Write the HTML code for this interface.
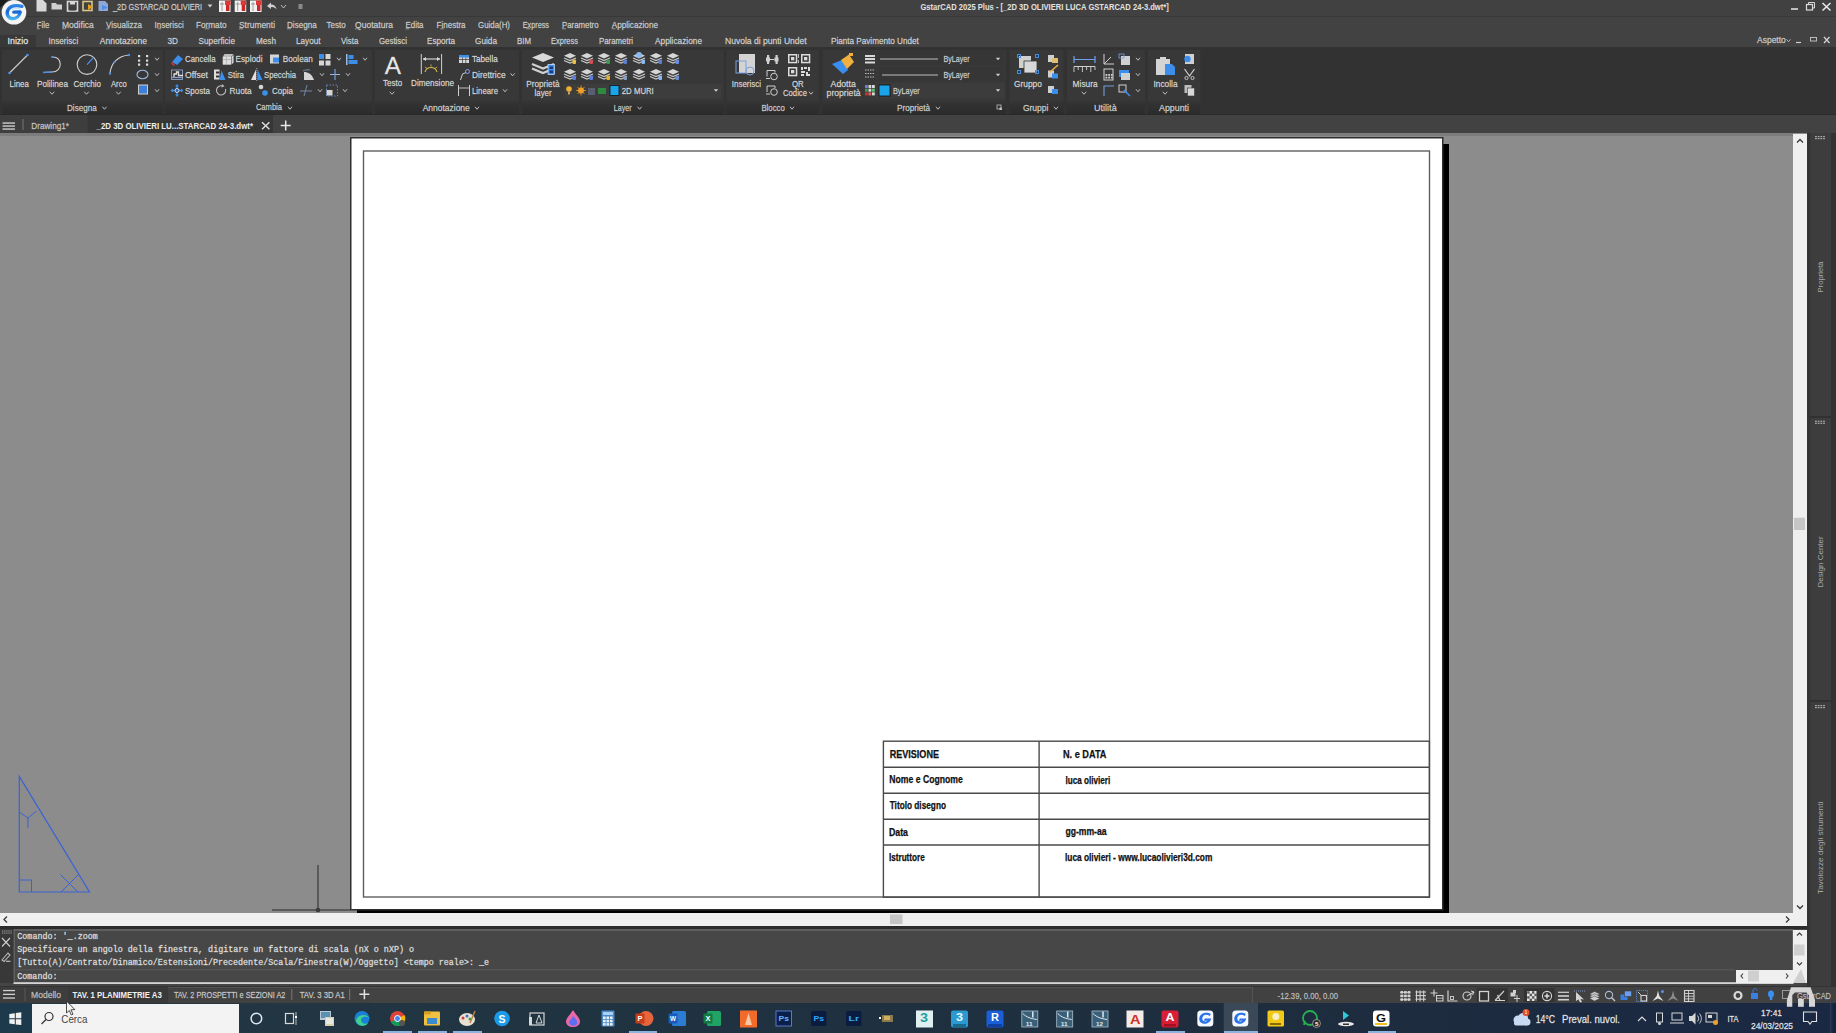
<!DOCTYPE html>
<html><head><meta charset="utf-8"><title>GstarCAD</title>
<style>html,body{margin:0;padding:0;width:1836px;height:1033px;overflow:hidden;background:#8c8c8c;font-family:"Liberation Sans",sans-serif}svg{display:block}</style>
</head><body>
<svg width="1836" height="1033" viewBox="0 0 1836 1033" shape-rendering="geometricPrecision">
<rect x="0" y="0" width="1836" height="16" fill="#414141" />
<rect x="0" y="16" width="1836" height="1" fill="#383838" />
<rect x="0" y="17" width="1836" height="30" fill="#424242" />
<rect x="0" y="35" width="36" height="12" fill="#383838" />
<path d="M0,0 L8,0 L0,8 Z" fill="#1c1c1c" />
<circle cx="14" cy="12.3" r="12.3" fill="#f4f4f4"/>
<defs><linearGradient id="gB" x1="0" y1="0" x2="1" y2="1"><stop offset="0" stop-color="#55b8ff"/><stop offset="1" stop-color="#1747d6"/></linearGradient></defs>
<defs><linearGradient id="gB2" x1="0" y1="0" x2="0" y2="1"><stop offset="0" stop-color="#2f86e8"/><stop offset="0.5" stop-color="#1565d8"/><stop offset="1" stop-color="#46b4f0"/></linearGradient></defs>
<path d="M22,6.3 C16,4.6 10,5.8 7.9,10 C5.9,14.3 8.3,18.6 12.6,18.6 C16.6,18.6 19.6,15.6 20.3,12 L13.8,12.1" fill="none" stroke="url(#gB2)" stroke-width="3.3" stroke-linecap="round" stroke-linejoin="round"/>
<path d="M12,9.5 C15,8.2 18,8.3 21,9" fill="none" stroke="#8fd8ff" stroke-width="0.8" opacity="0.7"/>
<path d="M36.5,0 L43,0 L46.5,3.5 L46.5,11.5 L36.5,11.5 Z" fill="#d8d8d8" />
<path d="M51.5,3 L56,3 L57,4.5 L62,4.5 L62,9.5 L51.5,9.5 Z" fill="#cfcfcf" />
<rect x="67.5" y="1.5" width="10" height="9.5" fill="none" stroke="#d8d8d8" stroke-width="1.6"/>
<rect x="70" y="1.5" width="5" height="3" fill="#d8d8d8" />
<rect x="69.5" y="7" width="6" height="3.5" fill="#3e3e3e" />
<rect x="83" y="1.5" width="9" height="9" fill="none" stroke="#d9c48a" stroke-width="1.6"/>
<path d="M88,4 L93,7 L88,10 Z" fill="#e8a020" />
<path d="M98.5,1 L105,1 L108,4 L108,11 L98.5,11 Z" fill="#8fa6d6" />
<path d="M102,5 L108,7.5 L102,10 Z" fill="#4a8ef0" />
<text x="113.0" y="9.7" font-family="Liberation Sans" font-size="9.2" font-weight="400" fill="#cfcfcf" textLength="89.0" lengthAdjust="spacingAndGlyphs"  stroke="#cfcfcf" stroke-width="0.35" stroke-opacity="0.6">_2D GSTARCAD OLIVIERI</text>
<path d="M207.5,4.5 L212.5,4.5 L210,7.5 Z" fill="#cfcfcf" />
<rect x="219" y="0.5" width="11.5" height="11.5" fill="#f2f2f2" />
<rect x="225" y="0.5" width="5.5" height="4.5" fill="#e03838" />
<rect x="226" y="5" width="3.5" height="6" fill="#c82828" />
<line x1="220" y1="4" x2="224" y2="4" stroke="#888" stroke-width="0.8" />
<line x1="222" y1="2" x2="222" y2="11" stroke="#888" stroke-width="0.8" />
<rect x="234.7" y="0.5" width="11.5" height="11.5" fill="#f2f2f2" />
<rect x="240.7" y="0.5" width="5.5" height="4.5" fill="#e03838" />
<rect x="241.7" y="5" width="3.5" height="6" fill="#c82828" />
<line x1="235.7" y1="4" x2="239.7" y2="4" stroke="#888" stroke-width="0.8" />
<line x1="237.7" y1="2" x2="237.7" y2="11" stroke="#888" stroke-width="0.8" />
<rect x="250" y="0.5" width="11.5" height="11.5" fill="#f2f2f2" />
<rect x="256" y="0.5" width="5.5" height="4.5" fill="#e03838" />
<rect x="257" y="5" width="3.5" height="6" fill="#c82828" />
<line x1="251" y1="4" x2="255" y2="4" stroke="#888" stroke-width="0.8" />
<line x1="253" y1="2" x2="253" y2="11" stroke="#888" stroke-width="0.8" />
<path d="M267,6 L271,2.5 L271,4.5 C274,4.5 276,6 276.5,9.5 C275,7.5 273.5,7 271,7 L271,9 Z" fill="#d0d0d0" />
<path d="M281.0,5.0 L283.5,8.0 L286.0,5.0" fill="none" stroke="#bdbdbd" stroke-width="1" />
<rect x="298.5" y="4" width="4" height="5" fill="#8a8a8a" />
<text x="920.4" y="10.0" font-family="Liberation Sans" font-size="9.2" font-weight="700" fill="#e2e2e2" textLength="248.4" lengthAdjust="spacingAndGlyphs" >GstarCAD 2025 Plus - [_2D 3D OLIVIERI LUCA GSTARCAD 24-3.dwt*]</text>
<line x1="1791" y1="9" x2="1798" y2="9" stroke="#dcdcdc" stroke-width="1.6" />
<rect x="1806.5" y="4.5" width="6" height="5.5" fill="none" stroke="#dcdcdc" stroke-width="1.2"/>
<path d="M1808.5,4.5 L1808.5,2.5 L1814.5,2.5 L1814.5,8 L1812.5,8" fill="none" stroke="#dcdcdc" stroke-width="1" />
<path d="M1822.5,3 L1830.5,10.5 M1830.5,3 L1822.5,10.5" fill="none" stroke="#e6e6e6" stroke-width="1.6" />
<text x="36.8" y="27.7" font-family="Liberation Sans" font-size="9" font-weight="400" fill="#cdcdcd" textLength="12.6" lengthAdjust="spacingAndGlyphs"  stroke="#cdcdcd" stroke-width="0.35" stroke-opacity="0.6">File</text>
<line x1="36.8" y1="28.8" x2="39.949999999999996" y2="28.8" stroke="#a8a8a8" stroke-width="0.8" />
<text x="62.0" y="27.7" font-family="Liberation Sans" font-size="9" font-weight="400" fill="#cdcdcd" textLength="31.8" lengthAdjust="spacingAndGlyphs"  stroke="#cdcdcd" stroke-width="0.35" stroke-opacity="0.6">Modifica</text>
<line x1="62.0" y1="28.8" x2="65.975" y2="28.8" stroke="#a8a8a8" stroke-width="0.8" />
<text x="106.0" y="27.7" font-family="Liberation Sans" font-size="9" font-weight="400" fill="#cdcdcd" textLength="36.0" lengthAdjust="spacingAndGlyphs"  stroke="#cdcdcd" stroke-width="0.35" stroke-opacity="0.6">Visualizza</text>
<line x1="106.0" y1="28.8" x2="109.6" y2="28.8" stroke="#a8a8a8" stroke-width="0.8" />
<text x="154.6" y="27.7" font-family="Liberation Sans" font-size="9" font-weight="400" fill="#cdcdcd" textLength="29.1" lengthAdjust="spacingAndGlyphs"  stroke="#cdcdcd" stroke-width="0.35" stroke-opacity="0.6">Inserisci</text>
<line x1="157.83333333333331" y1="28.8" x2="161.06666666666666" y2="28.8" stroke="#a8a8a8" stroke-width="0.8" />
<text x="196.0" y="27.7" font-family="Liberation Sans" font-size="9" font-weight="400" fill="#cdcdcd" textLength="30.5" lengthAdjust="spacingAndGlyphs"  stroke="#cdcdcd" stroke-width="0.35" stroke-opacity="0.6">Formato</text>
<line x1="204.71428571428572" y1="28.8" x2="209.07142857142856" y2="28.8" stroke="#a8a8a8" stroke-width="0.8" />
<text x="239.0" y="27.7" font-family="Liberation Sans" font-size="9" font-weight="400" fill="#cdcdcd" textLength="36.0" lengthAdjust="spacingAndGlyphs"  stroke="#cdcdcd" stroke-width="0.35" stroke-opacity="0.6">Strumenti</text>
<line x1="239.0" y1="28.8" x2="243.0" y2="28.8" stroke="#a8a8a8" stroke-width="0.8" />
<text x="287.0" y="27.7" font-family="Liberation Sans" font-size="9" font-weight="400" fill="#cdcdcd" textLength="29.7" lengthAdjust="spacingAndGlyphs"  stroke="#cdcdcd" stroke-width="0.35" stroke-opacity="0.6">Disegna</text>
<line x1="287.0" y1="28.8" x2="291.24285714285713" y2="28.8" stroke="#a8a8a8" stroke-width="0.8" />
<text x="326.5" y="27.7" font-family="Liberation Sans" font-size="9" font-weight="400" fill="#cdcdcd" textLength="19.1" lengthAdjust="spacingAndGlyphs"  stroke="#cdcdcd" stroke-width="0.35" stroke-opacity="0.6">Testo</text>
<text x="355.0" y="27.7" font-family="Liberation Sans" font-size="9" font-weight="400" fill="#cdcdcd" textLength="38.0" lengthAdjust="spacingAndGlyphs"  stroke="#cdcdcd" stroke-width="0.35" stroke-opacity="0.6">Quotatura</text>
<line x1="355.0" y1="28.8" x2="359.22222222222223" y2="28.8" stroke="#a8a8a8" stroke-width="0.8" />
<text x="405.5" y="27.7" font-family="Liberation Sans" font-size="9" font-weight="400" fill="#cdcdcd" textLength="18.0" lengthAdjust="spacingAndGlyphs"  stroke="#cdcdcd" stroke-width="0.35" stroke-opacity="0.6">Edita</text>
<line x1="405.5" y1="28.8" x2="409.1" y2="28.8" stroke="#a8a8a8" stroke-width="0.8" />
<text x="436.6" y="27.7" font-family="Liberation Sans" font-size="9" font-weight="400" fill="#cdcdcd" textLength="28.9" lengthAdjust="spacingAndGlyphs"  stroke="#cdcdcd" stroke-width="0.35" stroke-opacity="0.6">Finestra</text>
<line x1="440.21250000000003" y1="28.8" x2="443.82500000000005" y2="28.8" stroke="#a8a8a8" stroke-width="0.8" />
<text x="478.0" y="27.7" font-family="Liberation Sans" font-size="9" font-weight="400" fill="#cdcdcd" textLength="32.0" lengthAdjust="spacingAndGlyphs"  stroke="#cdcdcd" stroke-width="0.35" stroke-opacity="0.6">Guida(H)</text>
<text x="522.7" y="27.7" font-family="Liberation Sans" font-size="9" font-weight="400" fill="#cdcdcd" textLength="26.3" lengthAdjust="spacingAndGlyphs"  stroke="#cdcdcd" stroke-width="0.35" stroke-opacity="0.6">Express</text>
<line x1="526.4571428571429" y1="28.8" x2="530.2142857142858" y2="28.8" stroke="#a8a8a8" stroke-width="0.8" />
<text x="562.0" y="27.7" font-family="Liberation Sans" font-size="9" font-weight="400" fill="#cdcdcd" textLength="36.6" lengthAdjust="spacingAndGlyphs"  stroke="#cdcdcd" stroke-width="0.35" stroke-opacity="0.6">Parametro</text>
<line x1="562.0" y1="28.8" x2="566.0666666666667" y2="28.8" stroke="#a8a8a8" stroke-width="0.8" />
<text x="611.7" y="27.7" font-family="Liberation Sans" font-size="9" font-weight="400" fill="#cdcdcd" textLength="46.3" lengthAdjust="spacingAndGlyphs"  stroke="#cdcdcd" stroke-width="0.35" stroke-opacity="0.6">Applicazione</text>
<line x1="611.7" y1="28.8" x2="615.5583333333334" y2="28.8" stroke="#a8a8a8" stroke-width="0.8" />
<text x="7.5" y="44.1" font-family="Liberation Sans" font-size="9" font-weight="400" fill="#e8e8e8" textLength="20.7" lengthAdjust="spacingAndGlyphs"  stroke="#e8e8e8" stroke-width="0.35" stroke-opacity="0.6">Inizio</text>
<text x="48.5" y="44.1" font-family="Liberation Sans" font-size="9" font-weight="400" fill="#d2d2d2" textLength="29.7" lengthAdjust="spacingAndGlyphs"  stroke="#d2d2d2" stroke-width="0.35" stroke-opacity="0.6">Inserisci</text>
<text x="99.8" y="44.1" font-family="Liberation Sans" font-size="9" font-weight="400" fill="#d2d2d2" textLength="47.2" lengthAdjust="spacingAndGlyphs"  stroke="#d2d2d2" stroke-width="0.35" stroke-opacity="0.6">Annotazione</text>
<text x="167.5" y="44.1" font-family="Liberation Sans" font-size="9" font-weight="400" fill="#d2d2d2" textLength="10.5" lengthAdjust="spacingAndGlyphs"  stroke="#d2d2d2" stroke-width="0.35" stroke-opacity="0.6">3D</text>
<text x="198.6" y="44.1" font-family="Liberation Sans" font-size="9" font-weight="400" fill="#d2d2d2" textLength="36.4" lengthAdjust="spacingAndGlyphs"  stroke="#d2d2d2" stroke-width="0.35" stroke-opacity="0.6">Superficie</text>
<text x="256.0" y="44.1" font-family="Liberation Sans" font-size="9" font-weight="400" fill="#d2d2d2" textLength="20.0" lengthAdjust="spacingAndGlyphs"  stroke="#d2d2d2" stroke-width="0.35" stroke-opacity="0.6">Mesh</text>
<text x="296.0" y="44.1" font-family="Liberation Sans" font-size="9" font-weight="400" fill="#d2d2d2" textLength="24.5" lengthAdjust="spacingAndGlyphs"  stroke="#d2d2d2" stroke-width="0.35" stroke-opacity="0.6">Layout</text>
<text x="341.0" y="44.1" font-family="Liberation Sans" font-size="9" font-weight="400" fill="#d2d2d2" textLength="17.4" lengthAdjust="spacingAndGlyphs"  stroke="#d2d2d2" stroke-width="0.35" stroke-opacity="0.6">Vista</text>
<text x="379.0" y="44.1" font-family="Liberation Sans" font-size="9" font-weight="400" fill="#d2d2d2" textLength="28.0" lengthAdjust="spacingAndGlyphs"  stroke="#d2d2d2" stroke-width="0.35" stroke-opacity="0.6">Gestisci</text>
<text x="427.0" y="44.1" font-family="Liberation Sans" font-size="9" font-weight="400" fill="#d2d2d2" textLength="28.0" lengthAdjust="spacingAndGlyphs"  stroke="#d2d2d2" stroke-width="0.35" stroke-opacity="0.6">Esporta</text>
<text x="475.0" y="44.1" font-family="Liberation Sans" font-size="9" font-weight="400" fill="#d2d2d2" textLength="22.0" lengthAdjust="spacingAndGlyphs"  stroke="#d2d2d2" stroke-width="0.35" stroke-opacity="0.6">Guida</text>
<text x="517.0" y="44.1" font-family="Liberation Sans" font-size="9" font-weight="400" fill="#d2d2d2" textLength="14.0" lengthAdjust="spacingAndGlyphs"  stroke="#d2d2d2" stroke-width="0.35" stroke-opacity="0.6">BIM</text>
<text x="551.0" y="44.1" font-family="Liberation Sans" font-size="9" font-weight="400" fill="#d2d2d2" textLength="27.0" lengthAdjust="spacingAndGlyphs"  stroke="#d2d2d2" stroke-width="0.35" stroke-opacity="0.6">Express</text>
<text x="599.0" y="44.1" font-family="Liberation Sans" font-size="9" font-weight="400" fill="#d2d2d2" textLength="34.0" lengthAdjust="spacingAndGlyphs"  stroke="#d2d2d2" stroke-width="0.35" stroke-opacity="0.6">Parametri</text>
<text x="655.0" y="44.1" font-family="Liberation Sans" font-size="9" font-weight="400" fill="#d2d2d2" textLength="47.0" lengthAdjust="spacingAndGlyphs"  stroke="#d2d2d2" stroke-width="0.35" stroke-opacity="0.6">Applicazione</text>
<text x="725.0" y="44.1" font-family="Liberation Sans" font-size="9" font-weight="400" fill="#d2d2d2" textLength="81.7" lengthAdjust="spacingAndGlyphs"  stroke="#d2d2d2" stroke-width="0.35" stroke-opacity="0.6">Nuvola di punti Undet</text>
<text x="831.0" y="44.1" font-family="Liberation Sans" font-size="9" font-weight="400" fill="#d2d2d2" textLength="87.8" lengthAdjust="spacingAndGlyphs"  stroke="#d2d2d2" stroke-width="0.35" stroke-opacity="0.6">Pianta Pavimento Undet</text>
<text x="1757.0" y="43.4" font-family="Liberation Sans" font-size="9" font-weight="400" fill="#cfcfcf" textLength="28.8" lengthAdjust="spacingAndGlyphs"  stroke="#cfcfcf" stroke-width="0.35" stroke-opacity="0.6">Aspetto</text>
<path d="M1786.5,39.25 L1788.5,41.75 L1790.5,39.25" fill="none" stroke="#bbb" stroke-width="0.9" />
<line x1="1796" y1="42.5" x2="1801" y2="42.5" stroke="#cfcfcf" stroke-width="1.2" />
<rect x="1810.5" y="37.5" width="6" height="3.5" fill="none" stroke="#bdbdbd" stroke-width="1"/>
<path d="M1824,37 L1829.5,43 M1829.5,37 L1824,43" fill="none" stroke="#d0d0d0" stroke-width="1.3" />
<rect x="0" y="47" width="1836" height="67" fill="#323232" />
<rect x="0" y="114" width="1836" height="1" fill="#2a2a2a" />
<defs><linearGradient id="ptg" x1="0" y1="0" x2="0" y2="1"><stop offset="0" stop-color="#373737"/><stop offset="0.35" stop-color="#313131"/><stop offset="1" stop-color="#2c2c2c"/></linearGradient></defs>
<rect x="2" y="50" width="161" height="51" fill="#383838" />
<rect x="2" y="100" width="161" height="14" fill="url(#ptg)" />
<rect x="164.8" y="50" width="207.2" height="51" fill="#383838" />
<rect x="164.8" y="100" width="207.2" height="14" fill="url(#ptg)" />
<rect x="374.8" y="50" width="144.2" height="51" fill="#383838" />
<rect x="374.8" y="100" width="144.2" height="14" fill="url(#ptg)" />
<rect x="521.7" y="50" width="202.29999999999995" height="51" fill="#383838" />
<rect x="521.7" y="100" width="202.29999999999995" height="14" fill="url(#ptg)" />
<rect x="726.3" y="50" width="92.40000000000009" height="51" fill="#383838" />
<rect x="726.3" y="100" width="92.40000000000009" height="14" fill="url(#ptg)" />
<rect x="822.7" y="50" width="183.29999999999995" height="51" fill="#383838" />
<rect x="822.7" y="100" width="183.29999999999995" height="14" fill="url(#ptg)" />
<rect x="1009.5" y="50" width="54.09999999999991" height="51" fill="#383838" />
<rect x="1009.5" y="100" width="54.09999999999991" height="14" fill="url(#ptg)" />
<rect x="1067" y="50" width="78" height="51" fill="#383838" />
<rect x="1067" y="100" width="78" height="14" fill="url(#ptg)" />
<rect x="1148" y="50" width="52.40000000000009" height="51" fill="#383838" />
<rect x="1148" y="100" width="52.40000000000009" height="14" fill="url(#ptg)" />
<line x1="9.5" y1="73" x2="27.5" y2="55" stroke="#cfcfcf" stroke-width="1.1" />
<circle cx="9.5" cy="73" r="1.3" fill="#4d8fe8"/><circle cx="27.5" cy="55" r="1.3" fill="#4d8fe8"/>
<path d="M52,57 C63,56 63,72 52,72 L43,72.5" fill="none" stroke="#cfcfcf" stroke-width="1.1" />
<line x1="43" y1="72.5" x2="52" y2="72" stroke="#4d8fe8" stroke-width="1.3" />
<circle cx="52" cy="57" r="1" fill="#4d8fe8"/>
<circle cx="87" cy="64.6" r="9.8" fill="none" stroke="#cfcfcf" stroke-width="1.1"/>
<line x1="87" y1="64.6" x2="93.5" y2="57.5" stroke="#4d8fe8" stroke-width="1.2" />
<path d="M110,73.5 C111,63 118,56 129,55" fill="none" stroke="#cfcfcf" stroke-width="1.1" />
<circle cx="110" cy="73.5" r="1.2" fill="#4d8fe8"/><circle cx="129" cy="55" r="1.2" fill="#4d8fe8"/><circle cx="114.5" cy="62" r="1.1" fill="#4d8fe8"/>
<text x="9.5" y="86.7" font-family="Liberation Sans" font-size="9" font-weight="400" fill="#d6d6d6" textLength="19.3" lengthAdjust="spacingAndGlyphs"  stroke="#d6d6d6" stroke-width="0.35" stroke-opacity="0.6">Linea</text>
<text x="36.9" y="86.7" font-family="Liberation Sans" font-size="9" font-weight="400" fill="#d6d6d6" textLength="31.1" lengthAdjust="spacingAndGlyphs"  stroke="#d6d6d6" stroke-width="0.35" stroke-opacity="0.6">Polilinea</text>
<text x="73.5" y="86.7" font-family="Liberation Sans" font-size="9" font-weight="400" fill="#d6d6d6" textLength="27.5" lengthAdjust="spacingAndGlyphs"  stroke="#d6d6d6" stroke-width="0.35" stroke-opacity="0.6">Cerchio</text>
<text x="111.0" y="86.7" font-family="Liberation Sans" font-size="9" font-weight="400" fill="#d6d6d6" textLength="15.8" lengthAdjust="spacingAndGlyphs"  stroke="#d6d6d6" stroke-width="0.35" stroke-opacity="0.6">Arco</text>
<path d="M49.75,91.75 L52,94.25 L54.25,91.75" fill="none" stroke="#bdbdbd" stroke-width="1" />
<path d="M84.25,91.75 L86.5,94.25 L88.75,91.75" fill="none" stroke="#bdbdbd" stroke-width="1" />
<path d="M116.25,91.75 L118.5,94.25 L120.75,91.75" fill="none" stroke="#bdbdbd" stroke-width="1" />
<rect x="138" y="55" width="2.2" height="2.2" fill="#dcdcdc" />
<rect x="146" y="55" width="2.2" height="2.2" fill="#dcdcdc" />
<rect x="138" y="59.5" width="2.2" height="2.2" fill="#dcdcdc" />
<rect x="146" y="59.5" width="2.2" height="2.2" fill="#dcdcdc" />
<rect x="138" y="63.5" width="2.2" height="2.2" fill="#dcdcdc" />
<rect x="146" y="63.5" width="2.2" height="2.2" fill="#dcdcdc" />
<ellipse cx="142.5" cy="74.5" rx="5.5" ry="4.3" fill="none" stroke="#9fb8e0" stroke-width="1.1"/>
<rect x="138.5" y="85" width="9" height="9" fill="#3f7fd8" stroke="#cfcfcf" stroke-width="1"/>
<path d="M155.0,57.75 L157,60.25 L159.0,57.75" fill="none" stroke="#bdbdbd" stroke-width="1" />
<path d="M155.0,73.25 L157,75.75 L159.0,73.25" fill="none" stroke="#bdbdbd" stroke-width="1" />
<path d="M155.0,89.25 L157,91.75 L159.0,89.25" fill="none" stroke="#bdbdbd" stroke-width="1" />
<text x="67.0" y="110.8" font-family="Liberation Sans" font-size="9" font-weight="400" fill="#cfcfcf" textLength="29.7" lengthAdjust="spacingAndGlyphs"  stroke="#cfcfcf" stroke-width="0.35" stroke-opacity="0.6">Disegna</text>
<path d="M102.5,106.75 L104.5,109.25 L106.5,106.75" fill="none" stroke="#bdbdbd" stroke-width="1" />
<path d="M172,62 L178,55 L183,59 L177,65 Z" fill="#3b8eea" />
<path d="M172,62 L175,65 L173.5,66 L171,63.5 Z" fill="#d23030" />
<path d="M222.7,57 L224.5,54 L233.5,54 L231,57 Z" fill="#bdbdbd" />
<rect x="222.7" y="57" width="8.3" height="7.7" fill="#dedede" />
<path d="M231.5,57 L233.6,54.5 L233.6,62.5 L231.5,64.7 Z" fill="#d0d0d0" />
<line x1="223" y1="59.5" x2="231" y2="59.5" stroke="#9a9a9a" stroke-width="0.6" />
<line x1="226.5" y1="57" x2="226.5" y2="64.7" stroke="#9a9a9a" stroke-width="0.5" />
<rect x="270" y="54.5" width="9" height="9" fill="#d6d6d6" />
<rect x="273" y="57.5" width="6" height="5" fill="#3b8eea" />
<rect x="319" y="54" width="5" height="5" fill="#3b8eea" />
<rect x="325.5" y="54" width="5" height="5" fill="#d6d6d6" />
<rect x="319" y="60.5" width="5" height="5" fill="#d6d6d6" />
<rect x="325.5" y="60.5" width="5" height="5" fill="#d6d6d6" />
<path d="M337.0,57.75 L339,60.25 L341.0,57.75" fill="none" stroke="#bdbdbd" stroke-width="1" />
<rect x="346" y="54" width="1.5" height="11" fill="#9fb8e0" />
<rect x="348.5" y="55" width="5" height="4" fill="#3b8eea" />
<rect x="348.5" y="60" width="9" height="4" fill="#3b8eea" />
<path d="M363.0,57.75 L365,60.25 L367.0,57.75" fill="none" stroke="#bdbdbd" stroke-width="1" />
<text x="185.0" y="62.1" font-family="Liberation Sans" font-size="9" font-weight="400" fill="#d6d6d6" textLength="30.7" lengthAdjust="spacingAndGlyphs"  stroke="#d6d6d6" stroke-width="0.35" stroke-opacity="0.6">Cancella</text>
<text x="235.5" y="62.1" font-family="Liberation Sans" font-size="9" font-weight="400" fill="#d6d6d6" textLength="27.0" lengthAdjust="spacingAndGlyphs"  stroke="#d6d6d6" stroke-width="0.35" stroke-opacity="0.6">Esplodi</text>
<text x="282.8" y="62.1" font-family="Liberation Sans" font-size="9" font-weight="400" fill="#d6d6d6" textLength="30.0" lengthAdjust="spacingAndGlyphs"  stroke="#d6d6d6" stroke-width="0.35" stroke-opacity="0.6">Boolean</text>
<rect x="171.5" y="70" width="11" height="9.5" fill="none" stroke="#8aa0c8" stroke-width="0.9"/>
<path d="M174,78 L174,74 L176.5,74 L176.5,72 L178.5,72 L178.5,75.5 L183,75.5" fill="none" stroke="#e0e0e0" stroke-width="1.3" />
<line x1="172" y1="77.5" x2="183" y2="77.5" stroke="#8aa0c8" stroke-width="1.2" />
<rect x="214" y="69.5" width="5.5" height="10" fill="#dedede" />
<rect x="216" y="71.5" width="3.5" height="2" fill="#333" />
<rect x="216" y="75.5" width="3.5" height="2" fill="#333" />
<path d="M219.5,80 L221.5,70.5 L225.5,80 Z" fill="#3b8eea" />
<path d="M251,80 L256,69.5 L256,80 Z" fill="#e6dede" />
<path d="M257.5,69.5 L262.5,80 L257.5,80 Z" fill="#3b8eea" />
<line x1="256.8" y1="68" x2="256.8" y2="81" stroke="#bdbdbd" stroke-width="0.8" stroke-dasharray="1.2,0.8"/>
<path d="M304,80 L304,72 C308,72 312,74 314,80 Z" fill="#d6d6d6" />
<path d="M303,71 C305,70 307,69.5 310,70" fill="none" stroke="#7a9fd0" stroke-width="0.8" />
<path d="M320.0,73.25 L322,75.75 L324.0,73.25" fill="none" stroke="#bdbdbd" stroke-width="1" />
<line x1="330" y1="74.5" x2="340" y2="74.5" stroke="#9fb8e0" stroke-width="1" />
<line x1="335" y1="69" x2="335" y2="80" stroke="#6f9fe0" stroke-width="1.2" />
<path d="M346.0,73.25 L348,75.75 L350.0,73.25" fill="none" stroke="#bdbdbd" stroke-width="1" />
<text x="185.0" y="77.7" font-family="Liberation Sans" font-size="9" font-weight="400" fill="#d6d6d6" textLength="23.0" lengthAdjust="spacingAndGlyphs"  stroke="#d6d6d6" stroke-width="0.35" stroke-opacity="0.6">Offset</text>
<text x="227.7" y="77.7" font-family="Liberation Sans" font-size="9" font-weight="400" fill="#d6d6d6" textLength="16.2" lengthAdjust="spacingAndGlyphs"  stroke="#d6d6d6" stroke-width="0.35" stroke-opacity="0.6">Stira</text>
<text x="264.0" y="77.7" font-family="Liberation Sans" font-size="9" font-weight="400" fill="#d6d6d6" textLength="32.0" lengthAdjust="spacingAndGlyphs"  stroke="#d6d6d6" stroke-width="0.35" stroke-opacity="0.6">Specchia</text>
<path d="M177,85 L177,96 M171.5,90.5 L182.5,90.5" fill="none" stroke="#3b8eea" stroke-width="1.4" />
<path d="M177,84 L175,86.5 L179,86.5 Z M177,97 L175,94.5 L179,94.5 Z M170.5,90.5 L173,88.5 L173,92.5 Z M183.5,90.5 L181,88.5 L181,92.5 Z" fill="#3b8eea" />
<circle cx="177" cy="90.5" r="2" fill="#2a5ab0" stroke="#e8e8e8" stroke-width="0.9"/>
<path d="M222.5,86 A4.6,4.6 0 1 0 225.5,89" fill="none" stroke="#bdbdbd" stroke-width="1.1" />
<path d="M222,84 L224.5,86.2 L221.5,87.5 Z" fill="#bdbdbd" />
<circle cx="261" cy="87" r="2.3" fill="#d6d6d6"/><circle cx="265" cy="93" r="2.8" fill="#3b8eea"/>
<path d="M300,91 L312,91 M304,96 L307,85" fill="none" stroke="#7a8fb0" stroke-width="0.9" />
<path d="M318.0,89.25 L320,91.75 L322.0,89.25" fill="none" stroke="#bdbdbd" stroke-width="1" />
<rect x="326.5" y="90" width="6" height="5.5" fill="#d6d6d6" />
<rect x="326.5" y="85" width="11" height="11" fill="none" stroke="#6f9fe0" stroke-width="0.8" stroke-dasharray="1.5,1.5"/>
<path d="M343.0,89.25 L345,91.75 L347.0,89.25" fill="none" stroke="#bdbdbd" stroke-width="1" />
<text x="185.0" y="93.6" font-family="Liberation Sans" font-size="9" font-weight="400" fill="#d6d6d6" textLength="25.0" lengthAdjust="spacingAndGlyphs"  stroke="#d6d6d6" stroke-width="0.35" stroke-opacity="0.6">Sposta</text>
<text x="229.5" y="93.6" font-family="Liberation Sans" font-size="9" font-weight="400" fill="#d6d6d6" textLength="22.2" lengthAdjust="spacingAndGlyphs"  stroke="#d6d6d6" stroke-width="0.35" stroke-opacity="0.6">Ruota</text>
<text x="272.0" y="93.6" font-family="Liberation Sans" font-size="9" font-weight="400" fill="#d6d6d6" textLength="21.0" lengthAdjust="spacingAndGlyphs"  stroke="#d6d6d6" stroke-width="0.35" stroke-opacity="0.6">Copia</text>
<text x="255.9" y="110.4" font-family="Liberation Sans" font-size="9" font-weight="400" fill="#cfcfcf" textLength="26.1" lengthAdjust="spacingAndGlyphs"  stroke="#cfcfcf" stroke-width="0.35" stroke-opacity="0.6">Cambia</text>
<path d="M288.0,106.75 L290,109.25 L292.0,106.75" fill="none" stroke="#bdbdbd" stroke-width="1" />
<text x="384.8" y="73.7" font-family="Liberation Sans" font-size="24" font-weight="400" fill="#e6e6e6" textLength="16.2" lengthAdjust="spacingAndGlyphs"  stroke="#e6e6e6" stroke-width="0.35" stroke-opacity="0.6">A</text>
<text x="383.0" y="86.4" font-family="Liberation Sans" font-size="9" font-weight="400" fill="#d6d6d6" textLength="19.2" lengthAdjust="spacingAndGlyphs"  stroke="#d6d6d6" stroke-width="0.35" stroke-opacity="0.6">Testo</text>
<path d="M389.75,91.75 L392,94.25 L394.25,91.75" fill="none" stroke="#bdbdbd" stroke-width="1" />
<line x1="421.3" y1="54" x2="421.3" y2="74" stroke="#cfcfcf" stroke-width="1" />
<line x1="441.6" y1="54" x2="441.6" y2="74" stroke="#cfcfcf" stroke-width="1" />
<line x1="423" y1="59" x2="440" y2="59" stroke="#dcdcdc" stroke-width="1.1" />
<path d="M423,59 L426,57 L426,61 Z M440,59 L437,57 L437,61 Z" fill="#dcdcdc" />
<path d="M425,72 C427,66 435,66 437,72" fill="none" stroke="#d8b84a" stroke-width="1.1" />
<path d="M431,64.5 L431,66.5 M425,67 L427,68.5 M437,67 L435,68.5" fill="none" stroke="#d8b84a" stroke-width="0.9" />
<text x="411.0" y="86.4" font-family="Liberation Sans" font-size="9" font-weight="400" fill="#d6d6d6" textLength="43.0" lengthAdjust="spacingAndGlyphs"  stroke="#d6d6d6" stroke-width="0.35" stroke-opacity="0.6">Dimensione</text>
<rect x="459" y="55" width="10" height="8" fill="#d6d6d6" />
<rect x="459" y="55" width="10" height="2.5" fill="#3b8eea" />
<line x1="459" y1="59.5" x2="469" y2="59.5" stroke="#383838" stroke-width="0.7" />
<line x1="462.5" y1="57.5" x2="462.5" y2="63" stroke="#383838" stroke-width="0.7" />
<line x1="465.8" y1="57.5" x2="465.8" y2="63" stroke="#383838" stroke-width="0.7" />
<text x="472.0" y="62.1" font-family="Liberation Sans" font-size="9" font-weight="400" fill="#d6d6d6" textLength="25.7" lengthAdjust="spacingAndGlyphs"  stroke="#d6d6d6" stroke-width="0.35" stroke-opacity="0.6">Tabella</text>
<path d="M460.5,80 L462.5,74 L466,72.5" fill="none" stroke="#cfcfcf" stroke-width="1" />
<circle cx="467.5" cy="71.5" r="2" fill="none" stroke="#8a9ff0" stroke-width="1"/>
<text x="472.0" y="77.7" font-family="Liberation Sans" font-size="9" font-weight="400" fill="#d6d6d6" textLength="33.6" lengthAdjust="spacingAndGlyphs"  stroke="#d6d6d6" stroke-width="0.35" stroke-opacity="0.6">Direttrice</text>
<path d="M510.6,73.35 L512.6,75.85 L514.6,73.35" fill="none" stroke="#bdbdbd" stroke-width="1" />
<line x1="458.5" y1="85" x2="458.5" y2="96" stroke="#cfcfcf" stroke-width="1" />
<line x1="469.5" y1="85" x2="469.5" y2="96" stroke="#cfcfcf" stroke-width="1" />
<line x1="459" y1="88" x2="469" y2="88" stroke="#cfcfcf" stroke-width="0.9" />
<text x="472.0" y="93.7" font-family="Liberation Sans" font-size="9" font-weight="400" fill="#d6d6d6" textLength="26.0" lengthAdjust="spacingAndGlyphs"  stroke="#d6d6d6" stroke-width="0.35" stroke-opacity="0.6">Lineare</text>
<path d="M503.0,89.35 L505,91.85 L507.0,89.35" fill="none" stroke="#bdbdbd" stroke-width="1" />
<text x="422.7" y="110.8" font-family="Liberation Sans" font-size="9" font-weight="400" fill="#cfcfcf" textLength="47.1" lengthAdjust="spacingAndGlyphs"  stroke="#cfcfcf" stroke-width="0.35" stroke-opacity="0.6">Annotazione</text>
<path d="M475.0,106.75 L477,109.25 L479.0,106.75" fill="none" stroke="#bdbdbd" stroke-width="1" />
<path d="M532,68.5 L543,73 L554,68.5" fill="none" stroke="#d0d0d0" stroke-width="2.2" />
<path d="M532,64.0 L543,68.5 L554,64.0" fill="none" stroke="#d0d0d0" stroke-width="2.2" />
<path d="M532,57.5 L543,53 L554,57.5 L543,62 Z" fill="#d8d8d8" />
<rect x="548" y="64.5" width="6.5" height="10" fill="#3b8eea" stroke="#cfe0ff" stroke-width="0.7"/>
<rect x="549.5" y="66.5" width="3.5" height="2.5" fill="#1a3a80" />
<rect x="549.5" y="70.5" width="3.5" height="2.5" fill="#1a3a80" />
<text x="526.3" y="86.6" font-family="Liberation Sans" font-size="9" font-weight="400" fill="#d6d6d6" textLength="33.2" lengthAdjust="spacingAndGlyphs"  stroke="#d6d6d6" stroke-width="0.35" stroke-opacity="0.6">Proprietà</text>
<text x="534.5" y="95.7" font-family="Liberation Sans" font-size="9" font-weight="400" fill="#d6d6d6" textLength="17.1" lengthAdjust="spacingAndGlyphs"  stroke="#d6d6d6" stroke-width="0.35" stroke-opacity="0.6">layer</text>
<path d="M564,60.5 L570,63 L576,60.5" fill="none" stroke="#c8c8c8" stroke-width="1.3" />
<path d="M564,58 L570,60.5 L576,58" fill="none" stroke="#c8c8c8" stroke-width="1.3" />
<path d="M564,55.8 L570,53 L576,55.8 L570,58.6 Z" fill="#d6d6d6" />
<rect x="572.5" y="59.5" width="3.5" height="4.5" fill="#e8c040" rx="1" />
<path d="M581,60.5 L587,63 L593,60.5" fill="none" stroke="#c8c8c8" stroke-width="1.3" />
<path d="M581,58 L587,60.5 L593,58" fill="none" stroke="#c8c8c8" stroke-width="1.3" />
<path d="M581,55.8 L587,53 L593,55.8 L587,58.6 Z" fill="#d6d6d6" />
<rect x="589.5" y="59.5" width="3.5" height="4.5" fill="#d05050" rx="1" />
<path d="M598,60.5 L604,63 L610,60.5" fill="none" stroke="#c8c8c8" stroke-width="1.3" />
<path d="M598,58 L604,60.5 L610,58" fill="none" stroke="#c8c8c8" stroke-width="1.3" />
<path d="M598,55.8 L604,53 L610,55.8 L604,58.6 Z" fill="#d6d6d6" />
<rect x="606.5" y="59.5" width="3.5" height="4.5" fill="#3a9a50" rx="1" />
<path d="M615,60.5 L621,63 L627,60.5" fill="none" stroke="#c8c8c8" stroke-width="1.3" />
<path d="M615,58 L621,60.5 L627,58" fill="none" stroke="#c8c8c8" stroke-width="1.3" />
<path d="M615,55.8 L621,53 L627,55.8 L621,58.6 Z" fill="#d6d6d6" />
<rect x="623.5" y="59.5" width="3.5" height="4.5" fill="#5a7fd0" rx="1" />
<path d="M633,60.5 L639,63 L645,60.5" fill="none" stroke="#c8c8c8" stroke-width="1.3" />
<path d="M633,58 L639,60.5 L645,58" fill="none" stroke="#c8c8c8" stroke-width="1.3" />
<path d="M633,55.8 L639,53 L645,55.8 L639,58.6 Z" fill="#d6d6d6" />
<rect x="641.5" y="59.5" width="3.5" height="4.5" fill="#8ab8f0" rx="1" />
<path d="M650,60.5 L656,63 L662,60.5" fill="none" stroke="#c8c8c8" stroke-width="1.3" />
<path d="M650,58 L656,60.5 L662,58" fill="none" stroke="#c8c8c8" stroke-width="1.3" />
<path d="M650,55.8 L656,53 L662,55.8 L656,58.6 Z" fill="#d6d6d6" />
<rect x="658.5" y="59.5" width="3.5" height="4.5" fill="#5a7fd0" rx="1" />
<path d="M667,60.5 L673,63 L679,60.5" fill="none" stroke="#c8c8c8" stroke-width="1.3" />
<path d="M667,58 L673,60.5 L679,58" fill="none" stroke="#c8c8c8" stroke-width="1.3" />
<path d="M667,55.8 L673,53 L679,55.8 L673,58.6 Z" fill="#d6d6d6" />
<rect x="675.5" y="59.5" width="3.5" height="4.5" fill="#6a8fe0" rx="1" />
<path d="M564,76.5 L570,79 L576,76.5" fill="none" stroke="#c8c8c8" stroke-width="1.3" />
<path d="M564,74 L570,76.5 L576,74" fill="none" stroke="#c8c8c8" stroke-width="1.3" />
<path d="M564,71.8 L570,69 L576,71.8 L570,74.6 Z" fill="#d6d6d6" />
<rect x="572.5" y="75.5" width="3.5" height="4.5" fill="#5a7fe0" rx="1" />
<path d="M581,76.5 L587,79 L593,76.5" fill="none" stroke="#c8c8c8" stroke-width="1.3" />
<path d="M581,74 L587,76.5 L593,74" fill="none" stroke="#c8c8c8" stroke-width="1.3" />
<path d="M581,71.8 L587,69 L593,71.8 L587,74.6 Z" fill="#d6d6d6" />
<rect x="589.5" y="75.5" width="3.5" height="4.5" fill="#5a7fe0" rx="1" />
<path d="M598,76.5 L604,79 L610,76.5" fill="none" stroke="#c8c8c8" stroke-width="1.3" />
<path d="M598,74 L604,76.5 L610,74" fill="none" stroke="#c8c8c8" stroke-width="1.3" />
<path d="M598,71.8 L604,69 L610,71.8 L604,74.6 Z" fill="#d6d6d6" />
<rect x="606.5" y="75.5" width="3.5" height="4.5" fill="#e8b030" rx="1" />
<path d="M615,76.5 L621,79 L627,76.5" fill="none" stroke="#c8c8c8" stroke-width="1.3" />
<path d="M615,74 L621,76.5 L627,74" fill="none" stroke="#c8c8c8" stroke-width="1.3" />
<path d="M615,71.8 L621,69 L627,71.8 L621,74.6 Z" fill="#d6d6d6" />
<rect x="623.5" y="75.5" width="3.5" height="4.5" fill="#8a9fc0" rx="1" />
<path d="M633,76.5 L639,79 L645,76.5" fill="none" stroke="#c8c8c8" stroke-width="1.3" />
<path d="M633,74 L639,76.5 L645,74" fill="none" stroke="#c8c8c8" stroke-width="1.3" />
<path d="M633,71.8 L639,69 L645,71.8 L639,74.6 Z" fill="#d6d6d6" />
<path d="M650,76.5 L656,79 L662,76.5" fill="none" stroke="#c8c8c8" stroke-width="1.3" />
<path d="M650,74 L656,76.5 L662,74" fill="none" stroke="#c8c8c8" stroke-width="1.3" />
<path d="M650,71.8 L656,69 L662,71.8 L656,74.6 Z" fill="#d6d6d6" />
<rect x="658.5" y="75.5" width="3.5" height="4.5" fill="#8ab8f0" rx="1" />
<path d="M667,76.5 L673,79 L679,76.5" fill="none" stroke="#c8c8c8" stroke-width="1.3" />
<path d="M667,74 L673,76.5 L679,74" fill="none" stroke="#c8c8c8" stroke-width="1.3" />
<path d="M667,71.8 L673,69 L679,71.8 L673,74.6 Z" fill="#d6d6d6" />
<rect x="675.5" y="75.5" width="3.5" height="4.5" fill="#6a8fd0" rx="1" />
<circle cx="639" cy="55" r="3" fill="#8ab8f0"/>
<rect x="563.5" y="84" width="157.8" height="14.3" fill="#3d3d3d" />
<circle cx="569" cy="89" r="2.8" fill="#f0b030"/>
<rect x="568" y="91.5" width="2" height="3" fill="#c0a060" />
<circle cx="581" cy="90.5" r="3" fill="#f09a20"/>
<path d="M576,90.5 L586,90.5 M581,85.5 L581,95.5 M577.5,87 L584.5,94 M584.5,87 L577.5,94" fill="none" stroke="#f0a030" stroke-width="0.8" />
<rect x="588" y="88" width="7" height="7" fill="#5a5f70" />
<rect x="598" y="88" width="8" height="6" fill="#2f8a40" />
<rect x="610" y="85.5" width="9" height="10" fill="#1aa3e8" stroke="#111" stroke-width="0.8"/>
<text x="621.8" y="93.6" font-family="Liberation Sans" font-size="9" font-weight="400" fill="#d8d8d8" textLength="32.0" lengthAdjust="spacingAndGlyphs"  stroke="#d8d8d8" stroke-width="0.35" stroke-opacity="0.6">2D MURI</text>
<path d="M713.75,89.25 L718.25,89.25 L716,91.75 Z" fill="#d0d0d0" />
<text x="613.8" y="110.8" font-family="Liberation Sans" font-size="9" font-weight="400" fill="#cfcfcf" textLength="17.7" lengthAdjust="spacingAndGlyphs"  stroke="#cfcfcf" stroke-width="0.35" stroke-opacity="0.6">Layer</text>
<path d="M637.6,106.75 L639.6,109.25 L641.6,106.75" fill="none" stroke="#bdbdbd" stroke-width="1" />
<rect x="739" y="54" width="16" height="19" fill="#d4d4d4" />
<rect x="736" y="61" width="10" height="12" fill="none" stroke="#7aa0e0" stroke-width="1"/>
<circle cx="750" cy="71" r="4" fill="none" stroke="#7aa0e0" stroke-width="1"/>
<text x="731.8" y="86.6" font-family="Liberation Sans" font-size="9" font-weight="400" fill="#d6d6d6" textLength="29.2" lengthAdjust="spacingAndGlyphs"  stroke="#d6d6d6" stroke-width="0.35" stroke-opacity="0.6">Inserisci</text>
<rect x="767" y="55" width="2.2" height="9" fill="#d0d0d0" />
<rect x="775.5" y="55" width="2.2" height="9" fill="#d0d0d0" />
<rect x="766" y="57.5" width="4" height="4" fill="#d0d0d0" />
<rect x="774.5" y="57.5" width="4" height="4" fill="#d0d0d0" />
<line x1="770" y1="59.5" x2="774.5" y2="59.5" stroke="#d0d0d0" stroke-width="1" />
<path d="M767,76.5 L767,70.5 L775,70.5 L775,72.5" fill="none" stroke="#cfcfcf" stroke-width="1" />
<circle cx="774" cy="76.5" r="3.3" fill="none" stroke="#cfcfcf" stroke-width="1"/>
<line x1="766" y1="78.5" x2="770" y2="78.5" stroke="#cfcfcf" stroke-width="1" />
<path d="M767,92 L767,86 L775,86 L775,88" fill="none" stroke="#cfcfcf" stroke-width="1" />
<circle cx="774" cy="92" r="3.3" fill="none" stroke="#cfcfcf" stroke-width="1"/>
<line x1="766" y1="94" x2="770" y2="94" stroke="#cfcfcf" stroke-width="1" />
<rect x="788.75" y="54.75" width="7.8" height="7.8" fill="none" stroke="#dcdcdc" stroke-width="1.5"/>
<rect x="791" y="57" width="3.3" height="3.3" fill="#dcdcdc" />
<rect x="801.75" y="54.75" width="7.8" height="7.8" fill="none" stroke="#dcdcdc" stroke-width="1.5"/>
<rect x="804" y="57" width="3.3" height="3.3" fill="#dcdcdc" />
<rect x="788.75" y="67.75" width="7.8" height="7.8" fill="none" stroke="#dcdcdc" stroke-width="1.5"/>
<rect x="791" y="70" width="3.3" height="3.3" fill="#dcdcdc" />
<rect x="801" y="67" width="2" height="3" fill="#dcdcdc" />
<rect x="804" y="67" width="3" height="2" fill="#dcdcdc" />
<rect x="808" y="67" width="2" height="4" fill="#dcdcdc" />
<rect x="801" y="71" width="4" height="2" fill="#dcdcdc" />
<rect x="806" y="72" width="2" height="4" fill="#dcdcdc" />
<rect x="801" y="74" width="3" height="2" fill="#dcdcdc" />
<rect x="808" y="74" width="2" height="2" fill="#dcdcdc" />
<line x1="798.5" y1="54" x2="798.5" y2="58" stroke="#dcdcdc" stroke-width="0.8" />
<line x1="798.5" y1="60" x2="798.5" y2="63" stroke="#dcdcdc" stroke-width="0.8" />
<text x="792.0" y="86.6" font-family="Liberation Sans" font-size="9" font-weight="400" fill="#d6d6d6" textLength="11.7" lengthAdjust="spacingAndGlyphs"  stroke="#d6d6d6" stroke-width="0.35" stroke-opacity="0.6">QR</text>
<text x="783.0" y="96.1" font-family="Liberation Sans" font-size="9" font-weight="400" fill="#d6d6d6" textLength="24.0" lengthAdjust="spacingAndGlyphs"  stroke="#d6d6d6" stroke-width="0.35" stroke-opacity="0.6">Codice</text>
<path d="M809.0,91.75 L811,94.25 L813.0,91.75" fill="none" stroke="#bdbdbd" stroke-width="1" />
<text x="761.4" y="110.8" font-family="Liberation Sans" font-size="9" font-weight="400" fill="#cfcfcf" textLength="23.4" lengthAdjust="spacingAndGlyphs"  stroke="#cfcfcf" stroke-width="0.35" stroke-opacity="0.6">Blocco</text>
<path d="M790.0,106.75 L792,109.25 L794.0,106.75" fill="none" stroke="#bdbdbd" stroke-width="1" />
<path d="M832,64 L842,60 L848,70 L843,74 Z" fill="#3a8ef0" />
<path d="M841,60 L849,54.5 L854,62 L847,69 Z" fill="#f0b040" />
<rect x="849" y="53" width="4" height="3" fill="#f0b040" />
<text x="830.6" y="86.6" font-family="Liberation Sans" font-size="9" font-weight="400" fill="#d6d6d6" textLength="25.2" lengthAdjust="spacingAndGlyphs"  stroke="#d6d6d6" stroke-width="0.35" stroke-opacity="0.6">Adotta</text>
<text x="826.6" y="95.7" font-family="Liberation Sans" font-size="9" font-weight="400" fill="#d6d6d6" textLength="34.0" lengthAdjust="spacingAndGlyphs"  stroke="#d6d6d6" stroke-width="0.35" stroke-opacity="0.6">proprietà</text>
<rect x="865" y="55" width="10" height="2" fill="#d8d8d8" />
<rect x="865" y="58" width="10" height="2" fill="#d8d8d8" />
<rect x="865" y="61.5" width="10" height="2" fill="#d8d8d8" />
<line x1="865" y1="70" x2="875" y2="70" stroke="#bdbdbd" stroke-width="1" stroke-dasharray="1.5,1"/>
<line x1="865" y1="73.5" x2="875" y2="73.5" stroke="#bdbdbd" stroke-width="1" stroke-dasharray="1.5,1"/>
<line x1="865" y1="77" x2="875" y2="77" stroke="#bdbdbd" stroke-width="1" stroke-dasharray="1.5,1"/>
<rect x="865.0" y="85.0" width="2.8" height="3" fill="#6a80d0" />
<rect x="868.5" y="85.0" width="2.8" height="3" fill="#d8d8d8" />
<rect x="872.0" y="85.0" width="2.8" height="3" fill="#d8d8d8" />
<rect x="865.0" y="88.7" width="2.8" height="3" fill="#3aa050" />
<rect x="868.5" y="88.7" width="2.8" height="3" fill="#d8d8d8" />
<rect x="872.0" y="88.7" width="2.8" height="3" fill="#60c070" />
<rect x="865.0" y="92.4" width="2.8" height="3" fill="#d03030" />
<rect x="868.5" y="92.4" width="2.8" height="3" fill="#e06060" />
<rect x="872.0" y="92.4" width="2.8" height="3" fill="#d8d8d8" />
<rect x="879" y="51" width="125" height="14" fill="#363636" />
<rect x="879" y="67" width="125" height="14" fill="#363636" />
<rect x="876" y="83" width="128" height="15" fill="#3c3c3c" />
<line x1="880" y1="59" x2="938" y2="59" stroke="#bdbdbd" stroke-width="1" />
<line x1="882" y1="75" x2="938" y2="75" stroke="#bdbdbd" stroke-width="1" />
<text x="943.5" y="62.1" font-family="Liberation Sans" font-size="9" font-weight="400" fill="#cfcfcf" textLength="26.1" lengthAdjust="spacingAndGlyphs"  stroke="#cfcfcf" stroke-width="0.35" stroke-opacity="0.6">ByLayer</text>
<text x="943.5" y="78.1" font-family="Liberation Sans" font-size="9" font-weight="400" fill="#cfcfcf" textLength="26.1" lengthAdjust="spacingAndGlyphs"  stroke="#cfcfcf" stroke-width="0.35" stroke-opacity="0.6">ByLayer</text>
<rect x="879" y="85" width="11" height="11" fill="#1aa3e8" stroke="#111" stroke-width="0.8"/>
<text x="893.0" y="93.6" font-family="Liberation Sans" font-size="9" font-weight="400" fill="#cfcfcf" textLength="26.8" lengthAdjust="spacingAndGlyphs"  stroke="#cfcfcf" stroke-width="0.35" stroke-opacity="0.6">ByLayer</text>
<path d="M995.75,57.75 L1000.25,57.75 L998,60.25 Z" fill="#d0d0d0" />
<path d="M995.75,73.75 L1000.25,73.75 L998,76.25 Z" fill="#d0d0d0" />
<path d="M995.75,89.25 L1000.25,89.25 L998,91.75 Z" fill="#d0d0d0" />
<text x="897.0" y="110.8" font-family="Liberation Sans" font-size="9" font-weight="400" fill="#cfcfcf" textLength="33.0" lengthAdjust="spacingAndGlyphs"  stroke="#cfcfcf" stroke-width="0.35" stroke-opacity="0.6">Proprietà</text>
<path d="M936.0,106.75 L938,109.25 L940.0,106.75" fill="none" stroke="#bdbdbd" stroke-width="1" />
<rect x="997" y="105" width="4" height="4" fill="none" stroke="#bdbdbd" stroke-width="0.8"/>
<rect x="999.5" y="107.5" width="2.5" height="2.5" fill="#bdbdbd" />
<rect x="1019" y="56" width="12" height="12" fill="#d0d0d0" />
<rect x="1024" y="61" width="13" height="12" fill="#d8d8d8" stroke="#383838" stroke-width="0.8"/>
<rect x="1017.5" y="54.5" width="3" height="3" fill="none" stroke="#3b8eea" stroke-width="1"/>
<rect x="1035.5" y="54.5" width="3" height="3" fill="none" stroke="#3b8eea" stroke-width="1"/>
<rect x="1017.5" y="70.5" width="3" height="3" fill="none" stroke="#3b8eea" stroke-width="1"/>
<rect x="1035.5" y="70.5" width="3" height="3" fill="none" stroke="#3b8eea" stroke-width="1"/>
<text x="1014.0" y="86.6" font-family="Liberation Sans" font-size="9" font-weight="400" fill="#d6d6d6" textLength="27.8" lengthAdjust="spacingAndGlyphs"  stroke="#d6d6d6" stroke-width="0.35" stroke-opacity="0.6">Gruppo</text>
<rect x="1048" y="55" width="6" height="7" fill="#cfcfcf" />
<rect x="1052" y="58" width="6" height="5" fill="#e0c070" />
<rect x="1048" y="70.5" width="6" height="7" fill="#cfcfcf" />
<rect x="1052" y="73.5" width="6" height="5" fill="#3b8eea" />
<rect x="1048" y="86" width="6" height="7" fill="#cfcfcf" />
<rect x="1052" y="89" width="6" height="5" fill="#3b8eea" />
<path d="M1050,72 L1058,65" fill="none" stroke="#f0b040" stroke-width="1.5" />
<text x="1022.9" y="110.8" font-family="Liberation Sans" font-size="9" font-weight="400" fill="#cfcfcf" textLength="25.6" lengthAdjust="spacingAndGlyphs"  stroke="#cfcfcf" stroke-width="0.35" stroke-opacity="0.6">Gruppi</text>
<path d="M1054.0,106.75 L1056,109.25 L1058.0,106.75" fill="none" stroke="#bdbdbd" stroke-width="1" />
<line x1="1074" y1="59.5" x2="1095" y2="59.5" stroke="#6fa0f0" stroke-width="1" />
<line x1="1074" y1="56" x2="1074" y2="63" stroke="#6fa0f0" stroke-width="1.2" />
<line x1="1095" y1="56" x2="1095" y2="63" stroke="#6fa0f0" stroke-width="1.2" />
<line x1="1074" y1="66.5" x2="1095" y2="66.5" stroke="#cfcfcf" stroke-width="1" />
<line x1="1074.0" y1="66.5" x2="1074.0" y2="72" stroke="#cfcfcf" stroke-width="0.9" />
<line x1="1078.2" y1="66.5" x2="1078.2" y2="70" stroke="#cfcfcf" stroke-width="0.9" />
<line x1="1082.4" y1="66.5" x2="1082.4" y2="72" stroke="#cfcfcf" stroke-width="0.9" />
<line x1="1086.6" y1="66.5" x2="1086.6" y2="70" stroke="#cfcfcf" stroke-width="0.9" />
<line x1="1090.8" y1="66.5" x2="1090.8" y2="72" stroke="#cfcfcf" stroke-width="0.9" />
<line x1="1095.0" y1="66.5" x2="1095.0" y2="70" stroke="#cfcfcf" stroke-width="0.9" />
<text x="1072.6" y="86.6" font-family="Liberation Sans" font-size="9" font-weight="400" fill="#d6d6d6" textLength="25.1" lengthAdjust="spacingAndGlyphs"  stroke="#d6d6d6" stroke-width="0.35" stroke-opacity="0.6">Misura</text>
<path d="M1081.75,91.75 L1084,94.25 L1086.25,91.75" fill="none" stroke="#bdbdbd" stroke-width="1" />
<path d="M1104,54 L1104,64 L1114,64 M1104,64 L1111,57" fill="none" stroke="#d0d0d0" stroke-width="1" />
<rect x="1104" y="69" width="9" height="11" fill="none" stroke="#d0d0d0" stroke-width="1"/>
<rect x="1105.5" y="74.0" width="1.8" height="1.8" fill="#d0d0d0" />
<rect x="1105.5" y="76.7" width="1.8" height="1.8" fill="#d0d0d0" />
<rect x="1108.2" y="74.0" width="1.8" height="1.8" fill="#d0d0d0" />
<rect x="1108.2" y="76.7" width="1.8" height="1.8" fill="#d0d0d0" />
<rect x="1110.9" y="74.0" width="1.8" height="1.8" fill="#d0d0d0" />
<rect x="1110.9" y="76.7" width="1.8" height="1.8" fill="#d0d0d0" />
<path d="M1104,96 L1104,86 L1114,86" fill="none" stroke="#6f9fe0" stroke-width="1.1" />
<rect x="1121" y="56" width="9" height="9" fill="#d0d0d0" />
<rect x="1119" y="54" width="5" height="4" fill="none" stroke="#7aa0e0" stroke-width="0.8"/>
<rect x="1119" y="70" width="10" height="7" fill="#3b8eea" />
<rect x="1121" y="73" width="9" height="7" fill="#d0d0d0" />
<rect x="1119" y="85" width="7" height="7" fill="none" stroke="#d0d0d0" stroke-width="1"/>
<path d="M1124,90 L1130,96" fill="none" stroke="#3b8eea" stroke-width="1.5" />
<path d="M1136.0,57.75 L1138,60.25 L1140.0,57.75" fill="none" stroke="#bdbdbd" stroke-width="1" />
<path d="M1136.0,73.25 L1138,75.75 L1140.0,73.25" fill="none" stroke="#bdbdbd" stroke-width="1" />
<path d="M1136.0,89.25 L1138,91.75 L1140.0,89.25" fill="none" stroke="#bdbdbd" stroke-width="1" />
<text x="1094.0" y="110.8" font-family="Liberation Sans" font-size="9" font-weight="400" fill="#cfcfcf" textLength="22.7" lengthAdjust="spacingAndGlyphs"  stroke="#cfcfcf" stroke-width="0.35" stroke-opacity="0.6">Utilità</text>
<rect x="1156" y="59" width="14" height="16" fill="#d4d4d4" />
<rect x="1160" y="57" width="6" height="3" fill="#d4d4d4" />
<path d="M1165,64 L1172,64 L1175,67 L1175,75 L1165,75 Z" fill="#3b8eea" />
<text x="1153.5" y="86.6" font-family="Liberation Sans" font-size="9" font-weight="400" fill="#d6d6d6" textLength="24.0" lengthAdjust="spacingAndGlyphs"  stroke="#d6d6d6" stroke-width="0.35" stroke-opacity="0.6">Incolla</text>
<path d="M1162.75,91.75 L1165,94.25 L1167.25,91.75" fill="none" stroke="#bdbdbd" stroke-width="1" />
<rect x="1185" y="54" width="9" height="10" fill="#d0d0d0" />
<circle cx="1187.5" cy="59" r="3.2" fill="#3b8eea"/>
<path d="M1184.5,69 L1189.5,76 L1194.5,69" fill="none" stroke="#d0d0d0" stroke-width="1.2" />
<circle cx="1186.5" cy="78" r="1.6" fill="none" stroke="#d0d0d0" stroke-width="0.9"/><circle cx="1192.5" cy="78" r="1.6" fill="none" stroke="#d0d0d0" stroke-width="0.9"/>
<rect x="1184.5" y="85" width="7" height="8" fill="#bdbdbd" />
<rect x="1187.5" y="88" width="7" height="8" fill="#d8d8d8" stroke="#383838" stroke-width="0.6"/>
<text x="1159.0" y="110.8" font-family="Liberation Sans" font-size="9" font-weight="400" fill="#cfcfcf" textLength="30.0" lengthAdjust="spacingAndGlyphs"  stroke="#cfcfcf" stroke-width="0.35" stroke-opacity="0.6">Appunti</text>
<rect x="0" y="115" width="1836" height="18" fill="#424242" />
<rect x="0" y="115" width="87.7" height="18" fill="#3e3e3e" />
<rect x="87.7" y="115" width="185.3" height="18" fill="#363636" />
<rect x="2.5" y="122.4" width="12.5" height="1.3" fill="#d8d8d8" />
<rect x="2.5" y="125.4" width="12.5" height="1.3" fill="#d8d8d8" />
<rect x="2.5" y="128.4" width="12.5" height="1.3" fill="#d8d8d8" />
<line x1="23" y1="119" x2="23" y2="130" stroke="#777" stroke-width="1" />
<text x="31.3" y="128.6" font-family="Liberation Sans" font-size="9" font-weight="400" fill="#c8c8c8" textLength="37.7" lengthAdjust="spacingAndGlyphs"  stroke="#c8c8c8" stroke-width="0.35" stroke-opacity="0.6">Drawing1*</text>
<text x="96.5" y="128.6" font-family="Liberation Sans" font-size="9" font-weight="700" fill="#ededed" textLength="156.5" lengthAdjust="spacingAndGlyphs" >_2D 3D OLIVIERI LU...STARCAD  24-3.dwt*</text>
<path d="M262,122.3 L269.4,129.3 M269.4,122.3 L262,129.3" fill="none" stroke="#e0e0e0" stroke-width="1.4" />
<path d="M285.7,120.5 L285.7,130.5 M280.7,125.5 L290.7,125.5" fill="none" stroke="#e8e8e8" stroke-width="1.5" />
<rect x="0" y="133" width="1793" height="780" fill="#8c8c8c" />
<rect x="0" y="133" width="1793" height="3" fill="#7c7c7c" />
<line x1="318" y1="865" x2="318" y2="910" stroke="#3a3a3a" stroke-width="1.2" />
<line x1="272" y1="910" x2="350" y2="910" stroke="#4a4a4a" stroke-width="1.6" />
<circle cx="318" cy="910" r="2.3" fill="#3a3a3a"/>
<path d="M19.3,776.5 L19.3,892 L89.5,892 Z" fill="none" stroke="#3a62d6" stroke-width="1.2" />
<path d="M19.3,812 L27.9,818 L36.5,811 M27.9,818 L27.9,828" fill="none" stroke="#3a62d6" stroke-width="1" />
<path d="M19.3,880 L31.5,880 L31.5,892" fill="none" stroke="#3a62d6" stroke-width="1" />
<path d="M60.5,874.5 L77.9,892 M61,892 L78,875" fill="none" stroke="#3a62d6" stroke-width="1" />
<rect x="357" y="144" width="92" height="769" fill="#000" />
<rect x="1442" y="144" width="7" height="769" fill="#000" />
<rect x="357" y="909" width="1092" height="4" fill="#000" />
<rect x="350.75" y="137.75" width="1092" height="772" fill="#ffffff" stroke="#2e2e2e" stroke-width="1.5"/>
<rect x="363.5" y="151" width="1066" height="746" fill="none" stroke="#5e5e5e" stroke-width="1.4"/>
<rect x="883.4" y="741.2" width="546" height="156" fill="none" stroke="#4a4a4a" stroke-width="1.4"/>
<line x1="1039.1" y1="741.2" x2="1039.1" y2="897" stroke="#4a4a4a" stroke-width="1.4" />
<line x1="883.4" y1="767.3" x2="1429.5" y2="767.3" stroke="#4a4a4a" stroke-width="1.4" />
<line x1="883.4" y1="793.3" x2="1429.5" y2="793.3" stroke="#4a4a4a" stroke-width="1.4" />
<line x1="883.4" y1="819.2" x2="1429.5" y2="819.2" stroke="#4a4a4a" stroke-width="1.4" />
<line x1="883.4" y1="845" x2="1429.5" y2="845" stroke="#4a4a4a" stroke-width="1.4" />
<text x="889.7" y="758.1" font-family="Liberation Sans" font-size="10" font-weight="700" fill="#111" textLength="49.3" lengthAdjust="spacingAndGlyphs" stroke="#111" stroke-width="0.25">REVISIONE</text>
<text x="1063.0" y="758.1" font-family="Liberation Sans" font-size="10" font-weight="700" fill="#111" textLength="43.5" lengthAdjust="spacingAndGlyphs" stroke="#111" stroke-width="0.25">N. e DATA</text>
<text x="889.3" y="783.2" font-family="Liberation Sans" font-size="10" font-weight="700" fill="#111" textLength="73.5" lengthAdjust="spacingAndGlyphs" stroke="#111" stroke-width="0.25">Nome e Cognome</text>
<text x="1065.4" y="783.5" font-family="Liberation Sans" font-size="10" font-weight="700" fill="#111" textLength="44.9" lengthAdjust="spacingAndGlyphs" stroke="#111" stroke-width="0.25">luca olivieri</text>
<text x="889.7" y="808.5" font-family="Liberation Sans" font-size="10" font-weight="700" fill="#111" textLength="56.3" lengthAdjust="spacingAndGlyphs" stroke="#111" stroke-width="0.25">Titolo disegno</text>
<text x="889.0" y="835.5" font-family="Liberation Sans" font-size="10" font-weight="700" fill="#111" textLength="19.0" lengthAdjust="spacingAndGlyphs" stroke="#111" stroke-width="0.25">Data</text>
<text x="1065.4" y="835.2" font-family="Liberation Sans" font-size="10" font-weight="700" fill="#111" textLength="41.1" lengthAdjust="spacingAndGlyphs" stroke="#111" stroke-width="0.25">gg-mm-aa</text>
<text x="889.0" y="861.4" font-family="Liberation Sans" font-size="10" font-weight="700" fill="#111" textLength="35.7" lengthAdjust="spacingAndGlyphs" stroke="#111" stroke-width="0.25">Istruttore</text>
<text x="1065.0" y="861.4" font-family="Liberation Sans" font-size="10" font-weight="700" fill="#111" textLength="147.3" lengthAdjust="spacingAndGlyphs" stroke="#111" stroke-width="0.25">luca olivieri - www.lucaolivieri3d.com</text>
<rect x="1793" y="134" width="14" height="779" fill="#efefef" />
<path d="M1797,142.5 L1800,139.5 L1803,142.5" fill="none" stroke="#3a3a3a" stroke-width="1.3" />
<path d="M1797,905.5 L1800,908.5 L1803,905.5" fill="none" stroke="#3a3a3a" stroke-width="1.3" />
<rect x="1794" y="517.7" width="11" height="12.3" fill="#c6c6c6" />
<rect x="0" y="913" width="1793" height="13" fill="#efefef" />
<path d="M7,916.5 L4,919.5 L7,922.5" fill="none" stroke="#3a3a3a" stroke-width="1.3" />
<path d="M1786,916.5 L1789,919.5 L1786,922.5" fill="none" stroke="#3a3a3a" stroke-width="1.3" />
<rect x="890" y="914.4" width="12.5" height="9.6" fill="#c6c6c6" />
<rect x="1793" y="913" width="14" height="13" fill="#efefef" />
<rect x="1807" y="133" width="29" height="853" fill="#3d3d3d" />
<rect x="1807" y="133" width="3.3" height="853" fill="#333333" />
<rect x="1831" y="133" width="5" height="853" fill="#323232" />
<rect x="1815.0" y="136.0" width="1.8" height="1.2" fill="#a8a8a8" />
<rect x="1817.7" y="136.0" width="1.8" height="1.2" fill="#a8a8a8" />
<rect x="1820.4" y="136.0" width="1.8" height="1.2" fill="#a8a8a8" />
<rect x="1823.1" y="136.0" width="1.8" height="1.2" fill="#a8a8a8" />
<rect x="1815.0" y="138.0" width="1.8" height="1.2" fill="#a8a8a8" />
<rect x="1817.7" y="138.0" width="1.8" height="1.2" fill="#a8a8a8" />
<rect x="1820.4" y="138.0" width="1.8" height="1.2" fill="#a8a8a8" />
<rect x="1823.1" y="138.0" width="1.8" height="1.2" fill="#a8a8a8" />
<line x1="1810" y1="417" x2="1831" y2="417" stroke="#2a2a2a" stroke-width="1.2" />
<rect x="1815.0" y="420.7" width="1.8" height="1.2" fill="#a8a8a8" />
<rect x="1817.7" y="420.7" width="1.8" height="1.2" fill="#a8a8a8" />
<rect x="1820.4" y="420.7" width="1.8" height="1.2" fill="#a8a8a8" />
<rect x="1823.1" y="420.7" width="1.8" height="1.2" fill="#a8a8a8" />
<rect x="1815.0" y="422.7" width="1.8" height="1.2" fill="#a8a8a8" />
<rect x="1817.7" y="422.7" width="1.8" height="1.2" fill="#a8a8a8" />
<rect x="1820.4" y="422.7" width="1.8" height="1.2" fill="#a8a8a8" />
<rect x="1823.1" y="422.7" width="1.8" height="1.2" fill="#a8a8a8" />
<line x1="1810" y1="701" x2="1831" y2="701" stroke="#2a2a2a" stroke-width="1.2" />
<rect x="1815.0" y="705.0" width="1.8" height="1.2" fill="#a8a8a8" />
<rect x="1817.7" y="705.0" width="1.8" height="1.2" fill="#a8a8a8" />
<rect x="1820.4" y="705.0" width="1.8" height="1.2" fill="#a8a8a8" />
<rect x="1823.1" y="705.0" width="1.8" height="1.2" fill="#a8a8a8" />
<rect x="1815.0" y="707.0" width="1.8" height="1.2" fill="#a8a8a8" />
<rect x="1817.7" y="707.0" width="1.8" height="1.2" fill="#a8a8a8" />
<rect x="1820.4" y="707.0" width="1.8" height="1.2" fill="#a8a8a8" />
<rect x="1823.1" y="707.0" width="1.8" height="1.2" fill="#a8a8a8" />
<text x="0" y="0" transform="translate(1823.0,292.5) rotate(-90)" font-family="Liberation Sans" font-size="7.5" fill="#a8a8a8" textLength="31.1" lengthAdjust="spacingAndGlyphs">Proprietà</text>
<text x="0" y="0" transform="translate(1823.0,587.4) rotate(-90)" font-family="Liberation Sans" font-size="7.5" fill="#a8a8a8" textLength="51.1" lengthAdjust="spacingAndGlyphs">Design Center</text>
<text x="0" y="0" transform="translate(1823.0,893.9) rotate(-90)" font-family="Liberation Sans" font-size="7.5" fill="#a8a8a8" textLength="92.2" lengthAdjust="spacingAndGlyphs">Tavolozze degli strumenti</text>
<rect x="0" y="926" width="1807" height="60" fill="#454545" />
<rect x="0" y="926" width="1807" height="3" fill="#2b2b2b" />
<rect x="14" y="930" width="1779" height="53" fill="#474747" stroke="#7a7a7a" stroke-width="1"/>
<rect x="13.5" y="982.3" width="1780" height="1.6" fill="#e2e2e2" />
<line x1="14.5" y1="969.8" x2="1735" y2="969.8" stroke="#5a5a5a" stroke-width="1" />
<rect x="0" y="929" width="13.5" height="54" fill="#383838" />
<rect x="2.0" y="930.5" width="1.4" height="1" fill="#9a9a9a" />
<rect x="2.0" y="932.6" width="1.4" height="1" fill="#9a9a9a" />
<rect x="4.1" y="930.5" width="1.4" height="1" fill="#9a9a9a" />
<rect x="4.1" y="932.6" width="1.4" height="1" fill="#9a9a9a" />
<rect x="6.2" y="930.5" width="1.4" height="1" fill="#9a9a9a" />
<rect x="6.2" y="932.6" width="1.4" height="1" fill="#9a9a9a" />
<rect x="8.3" y="930.5" width="1.4" height="1" fill="#9a9a9a" />
<rect x="8.3" y="932.6" width="1.4" height="1" fill="#9a9a9a" />
<rect x="10.4" y="930.5" width="1.4" height="1" fill="#9a9a9a" />
<rect x="10.4" y="932.6" width="1.4" height="1" fill="#9a9a9a" />
<path d="M2,938 L10,946.5 M10,938 L2,946.5" fill="none" stroke="#cfcfcf" stroke-width="1.1" />
<path d="M2,960 L8,953 L10,955 L4,961.5 Z" fill="none" stroke="#bdbdbd" stroke-width="1.1" />
<line x1="6" y1="961.3" x2="10.5" y2="961.3" stroke="#bdbdbd" stroke-width="1.2" />
<text x="17.3" y="938.9" font-family="Liberation Mono" font-size="8.4" font-weight="400" fill="#e0e0e0" textLength="80.5" lengthAdjust="spacingAndGlyphs"  stroke="#e0e0e0" stroke-width="0.35" stroke-opacity="0.6">Comando: '_.zoom</text>
<text x="17.3" y="952.1" font-family="Liberation Mono" font-size="8.4" font-weight="400" fill="#e0e0e0" textLength="396.7" lengthAdjust="spacingAndGlyphs"  stroke="#e0e0e0" stroke-width="0.35" stroke-opacity="0.6">Specificare un angolo della finestra, digitare un fattore di scala (nX o nXP) o</text>
<text x="17.3" y="965.2" font-family="Liberation Mono" font-size="8.4" font-weight="400" fill="#e0e0e0" textLength="471.7" lengthAdjust="spacingAndGlyphs"  stroke="#e0e0e0" stroke-width="0.35" stroke-opacity="0.6">[Tutto(A)/Centrato/Dinamico/Estensioni/Precedente/Scala/Finestra(W)/Oggetto] &lt;tempo reale&gt;: _e</text>
<text x="17.3" y="979.2" font-family="Liberation Mono" font-size="8.4" font-weight="400" fill="#e0e0e0" textLength="40.2" lengthAdjust="spacingAndGlyphs"  stroke="#e0e0e0" stroke-width="0.35" stroke-opacity="0.6">Comando:</text>
<rect x="1793" y="930" width="14" height="53" fill="#efefef" />
<path d="M1797,935.5 L1799.5,933 L1802,935.5" fill="none" stroke="#3a3a3a" stroke-width="1.1" />
<path d="M1797,962.5 L1799.5,965 L1802,962.5" fill="none" stroke="#3a3a3a" stroke-width="1.1" />
<rect x="1794" y="944.5" width="10.5" height="11" fill="#cfcfcf" />
<rect x="1736" y="970" width="57" height="13" fill="#efefef" />
<path d="M1743,973.5 L1741,976 L1743,978.5" fill="none" stroke="#3a3a3a" stroke-width="1.1" />
<path d="M1786,973.5 L1788,976 L1786,978.5" fill="none" stroke="#3a3a3a" stroke-width="1.1" />
<rect x="1748" y="970.5" width="11" height="11" fill="#cfcfcf" />
<path d="M1793,983 L1801,969 L1806,983 Z" fill="#cfcfcf" />
<rect x="0" y="986" width="1836" height="17" fill="#414141" />
<rect x="0" y="986" width="1836" height="1" fill="#333" />
<rect x="0" y="987" width="68" height="16" fill="#3d3d3d" />
<rect x="68" y="987" width="100" height="16" fill="#393939" />
<rect x="3" y="989.9" width="12" height="1.3" fill="#d0d0d0" />
<rect x="3" y="993.6999999999999" width="12" height="1.3" fill="#d0d0d0" />
<rect x="3" y="997.4" width="12" height="1.3" fill="#d0d0d0" />
<line x1="25" y1="988" x2="25" y2="1001" stroke="#5a5a5a" stroke-width="1" />
<text x="31.0" y="997.9" font-family="Liberation Sans" font-size="9" font-weight="400" fill="#c0c0c0" textLength="30.0" lengthAdjust="spacingAndGlyphs"  stroke="#c0c0c0" stroke-width="0.35" stroke-opacity="0.6">Modello</text>
<text x="72.5" y="997.9" font-family="Liberation Sans" font-size="9" font-weight="700" fill="#f0f0f0" textLength="89.3" lengthAdjust="spacingAndGlyphs" >TAV. 1 PLANIMETRIE A3</text>
<text x="173.9" y="997.9" font-family="Liberation Sans" font-size="9" font-weight="400" fill="#c8c8c8" textLength="111.4" lengthAdjust="spacingAndGlyphs"  stroke="#c8c8c8" stroke-width="0.35" stroke-opacity="0.6">TAV. 2 PROSPETTI e SEZIONI A2</text>
<line x1="291.8" y1="989" x2="291.8" y2="1000" stroke="#888" stroke-width="0.8" />
<text x="299.7" y="997.9" font-family="Liberation Sans" font-size="9" font-weight="400" fill="#c8c8c8" textLength="45.1" lengthAdjust="spacingAndGlyphs"  stroke="#c8c8c8" stroke-width="0.35" stroke-opacity="0.6">TAV. 3 3D A1</text>
<line x1="349.7" y1="989" x2="349.7" y2="1000" stroke="#888" stroke-width="0.8" />
<path d="M364.4,989.3 L364.4,999.3 M359.4,994.3 L369.4,994.3" fill="none" stroke="#e0e0e0" stroke-width="1.5" />
<rect x="370" y="987" width="882" height="16" fill="#434343" />
<line x1="168" y1="987.5" x2="1252" y2="987.5" stroke="#535353" stroke-width="1" />
<line x1="1252.5" y1="987" x2="1252.5" y2="1003" stroke="#535353" stroke-width="1" />
<text x="1277.6" y="998.9" font-family="Liberation Sans" font-size="9" font-weight="400" fill="#bdbdbd" textLength="60.4" lengthAdjust="spacingAndGlyphs"  stroke="#bdbdbd" stroke-width="0.35" stroke-opacity="0.6">-12.39, 0.00, 0.00</text>
<rect x="1476.7" y="988" width="31" height="14" fill="#333333" />
<rect x="1523.8" y="988" width="30.7" height="14" fill="#333333" />
<rect x="1400.5" y="991.0" width="2.6" height="2.6" fill="#d2d2d2" />
<rect x="1400.5" y="994.6" width="2.6" height="2.6" fill="#d2d2d2" />
<rect x="1400.5" y="998.2" width="2.6" height="2.6" fill="#d2d2d2" />
<rect x="1404.1" y="991.0" width="2.6" height="2.6" fill="#d2d2d2" />
<rect x="1404.1" y="994.6" width="2.6" height="2.6" fill="#d2d2d2" />
<rect x="1404.1" y="998.2" width="2.6" height="2.6" fill="#d2d2d2" />
<rect x="1407.7" y="991.0" width="2.6" height="2.6" fill="#d2d2d2" />
<rect x="1407.7" y="994.6" width="2.6" height="2.6" fill="#d2d2d2" />
<rect x="1407.7" y="998.2" width="2.6" height="2.6" fill="#d2d2d2" />
<line x1="1400" y1="992.5" x2="1410.5" y2="992.5" stroke="#d2d2d2" stroke-width="0.8" />
<line x1="1400" y1="996" x2="1410.5" y2="996" stroke="#d2d2d2" stroke-width="0.8" />
<line x1="1400" y1="999.6" x2="1410.5" y2="999.6" stroke="#d2d2d2" stroke-width="0.8" />
<line x1="1416.5" y1="990.5" x2="1416.5" y2="1001.5" stroke="#d2d2d2" stroke-width="1.1" />
<line x1="1415.5" y1="992.0" x2="1426" y2="992.0" stroke="#d2d2d2" stroke-width="1.1" />
<line x1="1420.1" y1="990.5" x2="1420.1" y2="1001.5" stroke="#d2d2d2" stroke-width="1.1" />
<line x1="1415.5" y1="995.6" x2="1426" y2="995.6" stroke="#d2d2d2" stroke-width="1.1" />
<line x1="1423.7" y1="990.5" x2="1423.7" y2="1001.5" stroke="#d2d2d2" stroke-width="1.1" />
<line x1="1415.5" y1="999.2" x2="1426" y2="999.2" stroke="#d2d2d2" stroke-width="1.1" />
<path d="M1434,989.5 L1434,996.5 M1430.5,993 L1437.5,993" fill="none" stroke="#d2d2d2" stroke-width="1.1" />
<rect x="1436.5" y="995.5" width="6.5" height="5.5" fill="none" stroke="#d2d2d2" stroke-width="1"/>
<line x1="1436.5" y1="998.2" x2="1443" y2="998.2" stroke="#d2d2d2" stroke-width="0.8" />
<path d="M1448,990.5 L1448,1001 L1457.5,1001" fill="none" stroke="#d2d2d2" stroke-width="1.2" />
<rect x="1450.5" y="996.5" width="3" height="3" fill="none" stroke="#d2d2d2" stroke-width="0.9"/>
<circle cx="1467" cy="996" r="4" fill="none" stroke="#d2d2d2" stroke-width="1.1"/>
<path d="M1467,996 L1474,992 M1471,991 L1474,992 L1472.5,995" fill="none" stroke="#d2d2d2" stroke-width="1" />
<rect x="1479.5" y="991.5" width="9" height="9.5" fill="none" stroke="#d2d2d2" stroke-width="1.3"/>
<path d="M1495,1000.5 L1505,1000.5 M1495,1000.5 L1504,991 M1497.5,995 L1500,1000.5" fill="none" stroke="#d2d2d2" stroke-width="1.1" />
<rect x="1510.5" y="992.5" width="5" height="4" fill="#d2d2d2" />
<rect x="1513" y="990" width="3" height="3" fill="#d2d2d2" />
<line x1="1517" y1="995" x2="1517" y2="1002" stroke="#d2d2d2" stroke-width="1" />
<line x1="1514" y1="998.5" x2="1520" y2="998.5" stroke="#d2d2d2" stroke-width="1" />
<rect x="1527" y="991" width="9.5" height="10" fill="#e6e6e6" />
<rect x="1527.2" y="991.2" width="2.4" height="2.5" fill="#5a5a5a" />
<rect x="1527.2" y="996.2" width="2.4" height="2.5" fill="#5a5a5a" />
<rect x="1529.6000000000001" y="993.7" width="2.4" height="2.5" fill="#5a5a5a" />
<rect x="1529.6000000000001" y="998.7" width="2.4" height="2.5" fill="#5a5a5a" />
<rect x="1532.0" y="991.2" width="2.4" height="2.5" fill="#5a5a5a" />
<rect x="1532.0" y="996.2" width="2.4" height="2.5" fill="#5a5a5a" />
<rect x="1534.4" y="993.7" width="2.4" height="2.5" fill="#5a5a5a" />
<rect x="1534.4" y="998.7" width="2.4" height="2.5" fill="#5a5a5a" />
<circle cx="1547" cy="996" r="4.6" fill="none" stroke="#d2d2d2" stroke-width="1.1"/>
<path d="M1547,992.5 L1548,995 L1550.5,996 L1548,997 L1547,999.5 L1546,997 L1543.5,996 L1546,995 Z" fill="#d2d2d2" />
<rect x="1558" y="991.7" width="11" height="1.2" fill="#d2d2d2" />
<rect x="1558" y="995.2" width="11" height="1.6" fill="#d2d2d2" />
<rect x="1558" y="998.9000000000001" width="11" height="1.6" fill="#d2d2d2" />
<path d="M1576,992 L1584,999.5 L1580.5,999 L1582,1002 L1580,1002.5 L1578.5,999.5 L1576,1001 Z" fill="#d2d2d2" />
<line x1="1574" y1="991" x2="1585" y2="991" stroke="#8a9fd0" stroke-width="0.9" stroke-dasharray="1,1"/>
<path d="M1589.5,994.0 L1594.5,991.5 L1600,994.0 L1594.5,996.5 Z" fill="#cfcfcf" stroke="#3d3d3d" stroke-width="0.5" />
<path d="M1589.5,996.3 L1594.5,993.8 L1600,996.3 L1594.5,998.8 Z" fill="#cfcfcf" stroke="#3d3d3d" stroke-width="0.5" />
<path d="M1589.5,998.6 L1594.5,996.1 L1600,998.6 L1594.5,1001.1 Z" fill="#cfcfcf" stroke="#3d3d3d" stroke-width="0.5" />
<circle cx="1609" cy="995" r="3.6" fill="none" stroke="#a8b8d8" stroke-width="1.1"/>
<line x1="1611.5" y1="997.5" x2="1615" y2="1001" stroke="#cfcfcf" stroke-width="1.3" />
<rect x="1620.5" y="994.5" width="7" height="5.5" fill="#3a7fe0" />
<rect x="1624.5" y="991" width="7" height="5.5" fill="#6a9ff0" stroke="#3d3d3d" stroke-width="0.6"/>
<rect x="1636.5" y="990.5" width="11" height="11" fill="none" stroke="#5a8fd8" stroke-width="0.9" stroke-dasharray="1.2,1"/>
<rect x="1641" y="995.5" width="5.5" height="5.5" fill="none" stroke="#d2d2d2" stroke-width="1.1"/>
<path d="M1638,992 L1641,995" fill="none" stroke="#d2d2d2" stroke-width="0.9" />
<path d="M1658,990.5 L1659.3,996 L1663.5,1001 L1658,998.5 L1652.5,1001 L1656.7,996 Z" fill="#e0e0e0" />
<path d="M1673,990.5 L1674.3,996 L1678.5,1001 L1673,998.5 L1667.5,1001 L1671.7,996 Z" fill="#8a8a8a" />
<circle cx="1662.5" cy="991.5" r="1.5" fill="#5a8fe8"/>
<rect x="1684.5" y="990.5" width="9.5" height="11" fill="none" stroke="#d2d2d2" stroke-width="1.1"/>
<line x1="1684.5" y1="993.5" x2="1694" y2="993.5" stroke="#d2d2d2" stroke-width="0.9" />
<line x1="1684.5" y1="996.2" x2="1694" y2="996.2" stroke="#d2d2d2" stroke-width="0.9" />
<line x1="1684.5" y1="998.9" x2="1694" y2="998.9" stroke="#d2d2d2" stroke-width="0.9" />
<line x1="1688.5" y1="990.5" x2="1688.5" y2="1001.5" stroke="#d2d2d2" stroke-width="0.9" />
<circle cx="1738" cy="995.5" r="3.5" fill="none" stroke="#d8d8d8" stroke-width="2.2"/>
<rect x="1751" y="993" width="7" height="6" fill="#3a7fe0" />
<path d="M1753,993 L1753,990.5 C1753,988 1757,988 1757,990.5" fill="none" stroke="#3a7fe0" stroke-width="1" />
<ellipse cx="1771" cy="994" rx="3" ry="3.5" fill="#3a8ff0"/>
<rect x="1769.8" y="997" width="2.5" height="3" fill="#3a8ff0" />
<rect x="1782.5" y="990.5" width="8" height="8" fill="none" stroke="#9a9a9a" stroke-width="1"/>
<text x="1797.0" y="999.1" font-family="Liberation Sans" font-size="9.5" font-weight="400" fill="#bdbdbd" textLength="34.0" lengthAdjust="spacingAndGlyphs"  stroke="#bdbdbd" stroke-width="0.35" stroke-opacity="0.6">GstarCAD</text>
<defs><linearGradient id="tbg" x1="0" y1="0" x2="1" y2="0"><stop offset="0" stop-color="#223843"/><stop offset="0.45" stop-color="#1f3140"/><stop offset="0.75" stop-color="#1d2c3e"/><stop offset="1" stop-color="#1a2844"/></linearGradient></defs>
<rect x="0" y="1003" width="1836" height="30" fill="url(#tbg)" />
<rect x="0" y="1003" width="32" height="30" fill="#1d3a4c" />
<path d="M9.3,1014 L14.8,1013.2 L14.8,1018.3 L9.3,1018.3 Z M15.8,1013 L21.3,1012.2 L21.3,1018.3 L15.8,1018.3 Z M9.3,1019.3 L14.8,1019.3 L14.8,1024.3 L9.3,1023.6 Z M15.8,1019.3 L21.3,1019.3 L21.3,1025 L15.8,1024.4 Z" fill="#f0f0f0" />
<rect x="32" y="1004" width="207" height="29" fill="#f3f3f3" />
<circle cx="49" cy="1016.5" r="4" fill="none" stroke="#333" stroke-width="1.2"/>
<line x1="46" y1="1019.5" x2="41.5" y2="1024" stroke="#333" stroke-width="1.3" />
<text x="61.3" y="1023.3" font-family="Liberation Sans" font-size="11" font-weight="400" fill="#444" textLength="26.2" lengthAdjust="spacingAndGlyphs" >Cerca</text>
<circle cx="256.4" cy="1018.5" r="5.3" fill="none" stroke="#dfe8f0" stroke-width="1.5"/>
<rect x="285.5" y="1013.5" width="8" height="10" fill="none" stroke="#d8d8d8" stroke-width="1.2"/>
<line x1="296" y1="1012" x2="296" y2="1025" stroke="#bbb" stroke-width="1" />
<rect x="295" y="1016" width="2" height="2" fill="#fff" />
<rect x="320" y="1011" width="11" height="9" fill="#b8c8d8" />
<rect x="321" y="1012" width="9" height="6" fill="#5a90b0" />
<rect x="325" y="1017" width="9" height="9" fill="#d8d0b0" />
<rect x="326" y="1018" width="7" height="6" fill="#e8e8e0" />
<circle cx="362" cy="1018.5" r="7.5" fill="#1a7fd8"/>
<path d="M356,1021 C357,1014 367,1013 369,1018 C367,1016 361,1016 361,1020 C361,1023 365,1025 368,1023 C366,1027 358,1027 356,1021 Z" fill="#3fd28a" />
<circle cx="397.5" cy="1018.5" r="7.5" fill="#db4437"/>
<path d="M397.5,1018.5 L391,1022.3 A7.5,7.5 0 0 0 401,1025.2 Z" fill="#0f9d58" />
<path d="M397.5,1018.5 L401,1025.2 A7.5,7.5 0 0 0 404.5,1015 Z" fill="#f4b400" />
<circle cx="397.5" cy="1018.5" r="3" fill="#4285f4" stroke="#fff" stroke-width="1"/>
<circle cx="402" cy="1023" r="3" fill="#555"/>
<rect x="424" y="1011.5" width="16" height="14" fill="#f0c040" rx="1" />
<rect x="424" y="1011.5" width="7" height="3" fill="#d8a020" />
<rect x="427" y="1018" width="10" height="6" fill="#3a8ad0" />
<ellipse cx="467" cy="1019.5" rx="8" ry="6.5" fill="#e8e0d0"/>
<circle cx="463" cy="1018" r="1.5" fill="#d04040"/><circle cx="467" cy="1016" r="1.5" fill="#4070d0"/><circle cx="470" cy="1019" r="1.5" fill="#40a040"/>
<line x1="470" y1="1023" x2="475" y2="1011" stroke="#c08040" stroke-width="1.5" />
<circle cx="502" cy="1018.5" r="7.8" fill="#1a9ae8"/>
<text x="498.5" y="1022.6" font-family="Liberation Sans" font-size="11" font-weight="700" fill="#fff" textLength="7.0" lengthAdjust="spacingAndGlyphs" >S</text>
<rect x="530" y="1013" width="14" height="12" fill="none" stroke="#d8d8d8" stroke-width="1.2"/>
<path d="M536,1023 L539,1015 L542,1023 Z" fill="none" stroke="#d8d8d8" stroke-width="1" />
<rect x="529" y="1017" width="3" height="8" fill="#d8d8d8" />
<path d="M573,1010 C576,1015 580,1018 580,1021.5 C580,1025 577,1027 573,1027 C569,1027 566,1025 566,1021.5 C566,1018 570,1015 573,1010 Z" fill="#e868a8" />
<path d="M573,1016 C576,1019 578,1021 577,1024 C575,1027 569,1026 569,1022 C570,1020 572,1019 573,1016 Z" fill="#5a70f0" />
<rect x="601.5" y="1010.5" width="13" height="16" fill="#4a88c8" rx="1" />
<rect x="603" y="1012" width="10" height="3" fill="#a8d0f0" />
<rect x="603.0" y="1016.5" width="2.6" height="2.5" fill="#e8f0f8" />
<rect x="603.0" y="1019.8" width="2.6" height="2.5" fill="#e8f0f8" />
<rect x="603.0" y="1023.1" width="2.6" height="2.5" fill="#e8f0f8" />
<rect x="606.5" y="1016.5" width="2.6" height="2.5" fill="#e8f0f8" />
<rect x="606.5" y="1019.8" width="2.6" height="2.5" fill="#e8f0f8" />
<rect x="606.5" y="1023.1" width="2.6" height="2.5" fill="#e8f0f8" />
<rect x="610.0" y="1016.5" width="2.6" height="2.5" fill="#e8f0f8" />
<rect x="610.0" y="1019.8" width="2.6" height="2.5" fill="#e8f0f8" />
<rect x="610.0" y="1023.1" width="2.6" height="2.5" fill="#e8f0f8" />
<circle cx="646" cy="1018.5" r="7.5" fill="#e8643c"/>
<rect x="635.5" y="1013.5" width="9" height="10" fill="#c43e1c" rx="1" />
<text x="637.5" y="1021.3" font-family="Liberation Sans" font-size="8" font-weight="700" fill="#fff" textLength="5.0" lengthAdjust="spacingAndGlyphs" >P</text>
<rect x="672" y="1011" width="14" height="15" fill="#2b7cd3" rx="1.5" />
<rect x="668.5" y="1013.5" width="9" height="10" fill="#185abd" rx="1" />
<text x="670.0" y="1020.9" font-family="Liberation Sans" font-size="7" font-weight="700" fill="#fff" textLength="6.0" lengthAdjust="spacingAndGlyphs" >W</text>
<rect x="707" y="1011" width="14" height="15" fill="#21a366" rx="1.5" />
<rect x="703.5" y="1013.5" width="9" height="10" fill="#107c41" rx="1" />
<text x="705.5" y="1021.1" font-family="Liberation Sans" font-size="7.5" font-weight="700" fill="#fff" textLength="5.0" lengthAdjust="spacingAndGlyphs" >X</text>
<rect x="740" y="1010.5" width="17" height="17" fill="#f26b2a" />
<path d="M745,1025 L748.5,1013 L752,1025 Z" fill="#f8c8a0" />
<rect x="776" y="1011" width="15.5" height="15" fill="#0a1f4a" stroke="#5a7ac8" stroke-width="1"/>
<text x="778.5" y="1021.3" font-family="Liberation Sans" font-size="8" font-weight="700" fill="#6ab4ff" textLength="10.5" lengthAdjust="spacingAndGlyphs" >Ps</text>
<rect x="811" y="1011" width="15.5" height="15" fill="#0a1d40" rx="1.5" />
<text x="813.5" y="1021.3" font-family="Liberation Sans" font-size="8" font-weight="700" fill="#31a8ff" textLength="10.5" lengthAdjust="spacingAndGlyphs" >Ps</text>
<rect x="846" y="1011" width="15.5" height="15" fill="#0a1d40" rx="1.5" />
<text x="848.5" y="1021.3" font-family="Liberation Sans" font-size="8" font-weight="700" fill="#31a8ff" textLength="10.5" lengthAdjust="spacingAndGlyphs" >Lr</text>
<rect x="882" y="1015" width="11" height="7" fill="#8a7a50" />
<rect x="884" y="1016" width="6" height="4" fill="#d0b060" />
<rect x="879" y="1017" width="2" height="2" fill="#fff" />
<rect x="916" y="1010.5" width="17" height="17" fill="#e0f0f0" />
<text x="920.0" y="1022.1" font-family="Liberation Sans" font-size="12" font-weight="700" fill="#20a0a0" textLength="8.0" lengthAdjust="spacingAndGlyphs" >3</text>
<rect x="951" y="1010.5" width="17" height="17" fill="#2a9ad0" rx="2" />
<text x="956.0" y="1020.9" font-family="Liberation Sans" font-size="10" font-weight="700" fill="#e8f8ff" textLength="7.0" lengthAdjust="spacingAndGlyphs" >3</text>
<rect x="953" y="1024" width="13" height="3" fill="#1a6a90" />
<rect x="986.5" y="1010.5" width="17" height="17" fill="#1a5fd8" rx="2" />
<text x="991.0" y="1020.9" font-family="Liberation Sans" font-size="10" font-weight="700" fill="#fff" textLength="8.0" lengthAdjust="spacingAndGlyphs" >R</text>
<rect x="988" y="1024" width="14" height="3" fill="#1040a0" />
<rect x="1021.8" y="1011" width="16" height="16" fill="#3a5f78" stroke="#a8c0d0" stroke-width="0.8"/>
<path d="M1022.8,1013.5 C1026.8,1017.5 1030.8,1018.5 1036.8,1019.5" fill="none" stroke="#e0e8f0" stroke-width="1" />
<line x1="1032.8" y1="1011.5" x2="1032.8" y2="1017.5" stroke="#e0e8f0" stroke-width="1.5" />
<text x="1025.8" y="1025.6" font-family="Liberation Sans" font-size="6" font-weight="700" fill="#e0e8f0" textLength="7.0" lengthAdjust="spacingAndGlyphs" >11</text>
<rect x="1056.7" y="1011" width="16" height="16" fill="#3a5f78" stroke="#a8c0d0" stroke-width="0.8"/>
<path d="M1057.7,1013.5 C1061.7,1017.5 1065.7,1018.5 1071.7,1019.5" fill="none" stroke="#e0e8f0" stroke-width="1" />
<line x1="1067.7" y1="1011.5" x2="1067.7" y2="1017.5" stroke="#e0e8f0" stroke-width="1.5" />
<text x="1060.7" y="1025.6" font-family="Liberation Sans" font-size="6" font-weight="700" fill="#e0e8f0" textLength="7.0" lengthAdjust="spacingAndGlyphs" >11</text>
<rect x="1092" y="1011" width="16" height="16" fill="#3a5f78" stroke="#a8c0d0" stroke-width="0.8"/>
<path d="M1093,1013.5 C1097,1017.5 1101,1018.5 1107,1019.5" fill="none" stroke="#e0e8f0" stroke-width="1" />
<line x1="1103" y1="1011.5" x2="1103" y2="1017.5" stroke="#e0e8f0" stroke-width="1.5" />
<text x="1096.0" y="1025.6" font-family="Liberation Sans" font-size="6" font-weight="700" fill="#e0e8f0" textLength="7.0" lengthAdjust="spacingAndGlyphs" >12</text>
<rect x="1126.5" y="1010.5" width="17" height="17" fill="#f5ece8" />
<text x="1130.0" y="1023.5" font-family="Liberation Sans" font-size="13" font-weight="700" fill="#d03020" textLength="10.5" lengthAdjust="spacingAndGlyphs" >A</text>
<rect x="1161.5" y="1010.5" width="17" height="17" fill="#d81f36" rx="2" />
<text x="1165.5" y="1021.2" font-family="Liberation Sans" font-size="10" font-weight="700" fill="#fff" textLength="9.0" lengthAdjust="spacingAndGlyphs" >A</text>
<rect x="1164" y="1024" width="12" height="2.5" fill="#a01020" />
<rect x="1197.3" y="1010.5" width="16" height="16" fill="#f4f8ff" rx="3.5" />
<path d="M1210.8,1014.0 C1207.3,1011.5 1200.3,1012.5 1199.3,1018.0 C1198.8,1023.0 1203.3,1024.5 1206.8,1023.5 C1209.3,1022.5 1210.8,1020.5 1211.3,1018.5 L1204.8,1018.5 L1203.8,1020.8 L1207.8,1020.8 C1206.3,1022.0 1202.3,1022.0 1202.3,1018.5 C1202.3,1015.0 1206.3,1013.5 1209.8,1016.0 Z" fill="#2a72e8" />
<rect x="1223.7" y="1003" width="34.3" height="30" fill="#3a4858" />
<rect x="1232.3" y="1010.5" width="16" height="16" fill="#f4f8ff" rx="3.5" />
<path d="M1245.8,1014.0 C1242.3,1011.5 1235.3,1012.5 1234.3,1018.0 C1233.8,1023.0 1238.3,1024.5 1241.8,1023.5 C1244.3,1022.5 1245.8,1020.5 1246.3,1018.5 L1239.8,1018.5 L1238.8,1020.8 L1242.8,1020.8 C1241.3,1022.0 1237.3,1022.0 1237.3,1018.5 C1237.3,1015.0 1241.3,1013.5 1244.8,1016.0 Z" fill="#2a72e8" />
<rect x="1267.5" y="1010.5" width="16.5" height="16" fill="#f0c818" rx="1.5" />
<circle cx="1275.8" cy="1016.5" r="3.5" fill="#f8f0c0"/>
<rect x="1270" y="1023" width="11" height="2" fill="#8a6a00" />
<circle cx="1310" cy="1018" r="7" fill="none" stroke="#28b050" stroke-width="1.8"/>
<path d="M1304,1025 L1305,1021" fill="none" stroke="#28b050" stroke-width="1.8" />
<circle cx="1316.5" cy="1023.5" r="4" fill="#2a2a2a" stroke="#ccc" stroke-width="0.6"/>
<text x="1315.0" y="1025.8" font-family="Liberation Sans" font-size="6" font-weight="700" fill="#fff" textLength="3.5" lengthAdjust="spacingAndGlyphs" >5</text>
<path d="M1343,1011 L1349,1015.5 L1343,1020 Z" fill="#30c8d8" />
<ellipse cx="1346" cy="1024" rx="8" ry="2.2" fill="#e8e8e8"/>
<rect x="1343" y="1023.5" width="6" height="1.5" fill="#333" />
<rect x="1373" y="1010.5" width="16.5" height="16" fill="#ffffff" rx="3" />
<text x="1376.0" y="1021.8" font-family="Liberation Sans" font-size="11" font-weight="700" fill="#111" textLength="10.0" lengthAdjust="spacingAndGlyphs" >G</text>
<rect x="1375" y="1023" width="12" height="2" fill="#f0c020" />
<rect x="383" y="1031" width="29" height="2" fill="#8ab4e0" />
<rect x="418" y="1031" width="29" height="2" fill="#8ab4e0" />
<rect x="453" y="1031" width="29" height="2" fill="#8ab4e0" />
<rect x="629" y="1031" width="28" height="2" fill="#8ab4e0" />
<rect x="1156" y="1031" width="29" height="2" fill="#8ab4e0" />
<rect x="1224" y="1031" width="34" height="2" fill="#8ab4e0" />
<rect x="1368" y="1031" width="28" height="2" fill="#8ab4e0" />
<circle cx="1518" cy="1020" r="4.5" fill="#c8daf2"/><circle cx="1523" cy="1018" r="5" fill="#c8daf2"/><circle cx="1527" cy="1022" r="3.5" fill="#c8daf2"/>
<rect x="1514" y="1021" width="14" height="4.5" fill="#c8daf2" rx="2" />
<circle cx="1526" cy="1012.5" r="3.5" fill="#e0502e"/>
<text x="1525.0" y="1014.2" font-family="Liberation Sans" font-size="5" font-weight="700" fill="#fff" textLength="2.0" lengthAdjust="spacingAndGlyphs" >1</text>
<text x="1535.7" y="1022.6" font-family="Liberation Sans" font-size="10.5" font-weight="400" fill="#e8e8e8" textLength="19.3" lengthAdjust="spacingAndGlyphs"  stroke="#e8e8e8" stroke-width="0.35" stroke-opacity="0.6">14°C</text>
<text x="1562.0" y="1022.6" font-family="Liberation Sans" font-size="10.5" font-weight="400" fill="#e8e8e8" textLength="58.0" lengthAdjust="spacingAndGlyphs"  stroke="#e8e8e8" stroke-width="0.35" stroke-opacity="0.6">Preval. nuvol.</text>
<path d="M1638,1021 L1642,1017 L1646,1021" fill="none" stroke="#e0e0e0" stroke-width="1.1" />
<rect x="1656.5" y="1013" width="6" height="9" fill="none" stroke="#d8d8d8" stroke-width="1"/>
<circle cx="1659.5" cy="1023.5" r="1.5" fill="#d8d8d8"/>
<rect x="1672" y="1013" width="10" height="7" fill="none" stroke="#d8d8d8" stroke-width="1"/>
<line x1="1670" y1="1023" x2="1684" y2="1023" stroke="#d8d8d8" stroke-width="1" />
<path d="M1689,1016 L1692,1016 L1695.5,1012.5 L1695.5,1024.5 L1692,1021 L1689,1021 Z" fill="#d8d8d8" />
<path d="M1697.5,1015.5 C1699,1017.5 1699,1019.5 1697.5,1021.5 M1699.5,1013.5 C1702,1017 1702,1020 1699.5,1023.5" fill="none" stroke="#d8d8d8" stroke-width="0.9" />
<rect x="1706" y="1013" width="11" height="9" fill="none" stroke="#d8d8d8" stroke-width="1"/>
<rect x="1708" y="1015" width="4" height="3" fill="#d8d8d8" />
<circle cx="1715.5" cy="1022.5" r="2.5" fill="#f0a020"/>
<text x="1727.5" y="1022.3" font-family="Liberation Sans" font-size="9.5" font-weight="400" fill="#e8e8e8" textLength="11.0" lengthAdjust="spacingAndGlyphs"  stroke="#e8e8e8" stroke-width="0.35" stroke-opacity="0.6">ITA</text>
<text x="1761.0" y="1015.8" font-family="Liberation Sans" font-size="9.5" font-weight="400" fill="#e8e8e8" textLength="21.0" lengthAdjust="spacingAndGlyphs"  stroke="#e8e8e8" stroke-width="0.35" stroke-opacity="0.6">17:41</text>
<text x="1751.0" y="1028.8" font-family="Liberation Sans" font-size="9.5" font-weight="400" fill="#e8e8e8" textLength="42.0" lengthAdjust="spacingAndGlyphs"  stroke="#e8e8e8" stroke-width="0.35" stroke-opacity="0.6">24/03/2025</text>
<path d="M1803.5,1012 L1816.5,1012 L1816.5,1021.5 L1812,1021.5 L1810,1024 L1808,1021.5 L1803.5,1021.5 Z" fill="none" stroke="#e0e0e0" stroke-width="1.1" />
<rect x="1833.5" y="1003" width="2.5" height="30" fill="#152235" />
<line x1="1830.8" y1="1003" x2="1830.8" y2="1033" stroke="#3a4a60" stroke-width="0.8" />
<path d="M1791,987.2 L1810.6,987.2 L1815,1000 L1815,1006.8 L1809,1006.8 L1809,995 L1806.5,992.6 L1795,992.6 L1792.3,995 L1792.3,1006.8 L1786.9,1006.8 L1786.9,1000 Z" fill="#d6d6d6" />
<rect x="1798" y="999" width="5.8" height="7.8" fill="#d6d6d6" />
<path d="M66.5,1001 L66.5,1013 L69.3,1010.5 L71.3,1015 L73,1014.2 L71,1009.8 L74.8,1009.6 Z" fill="#f4f4f4" stroke="#222" stroke-width="0.8" />
</svg>
</body></html>
